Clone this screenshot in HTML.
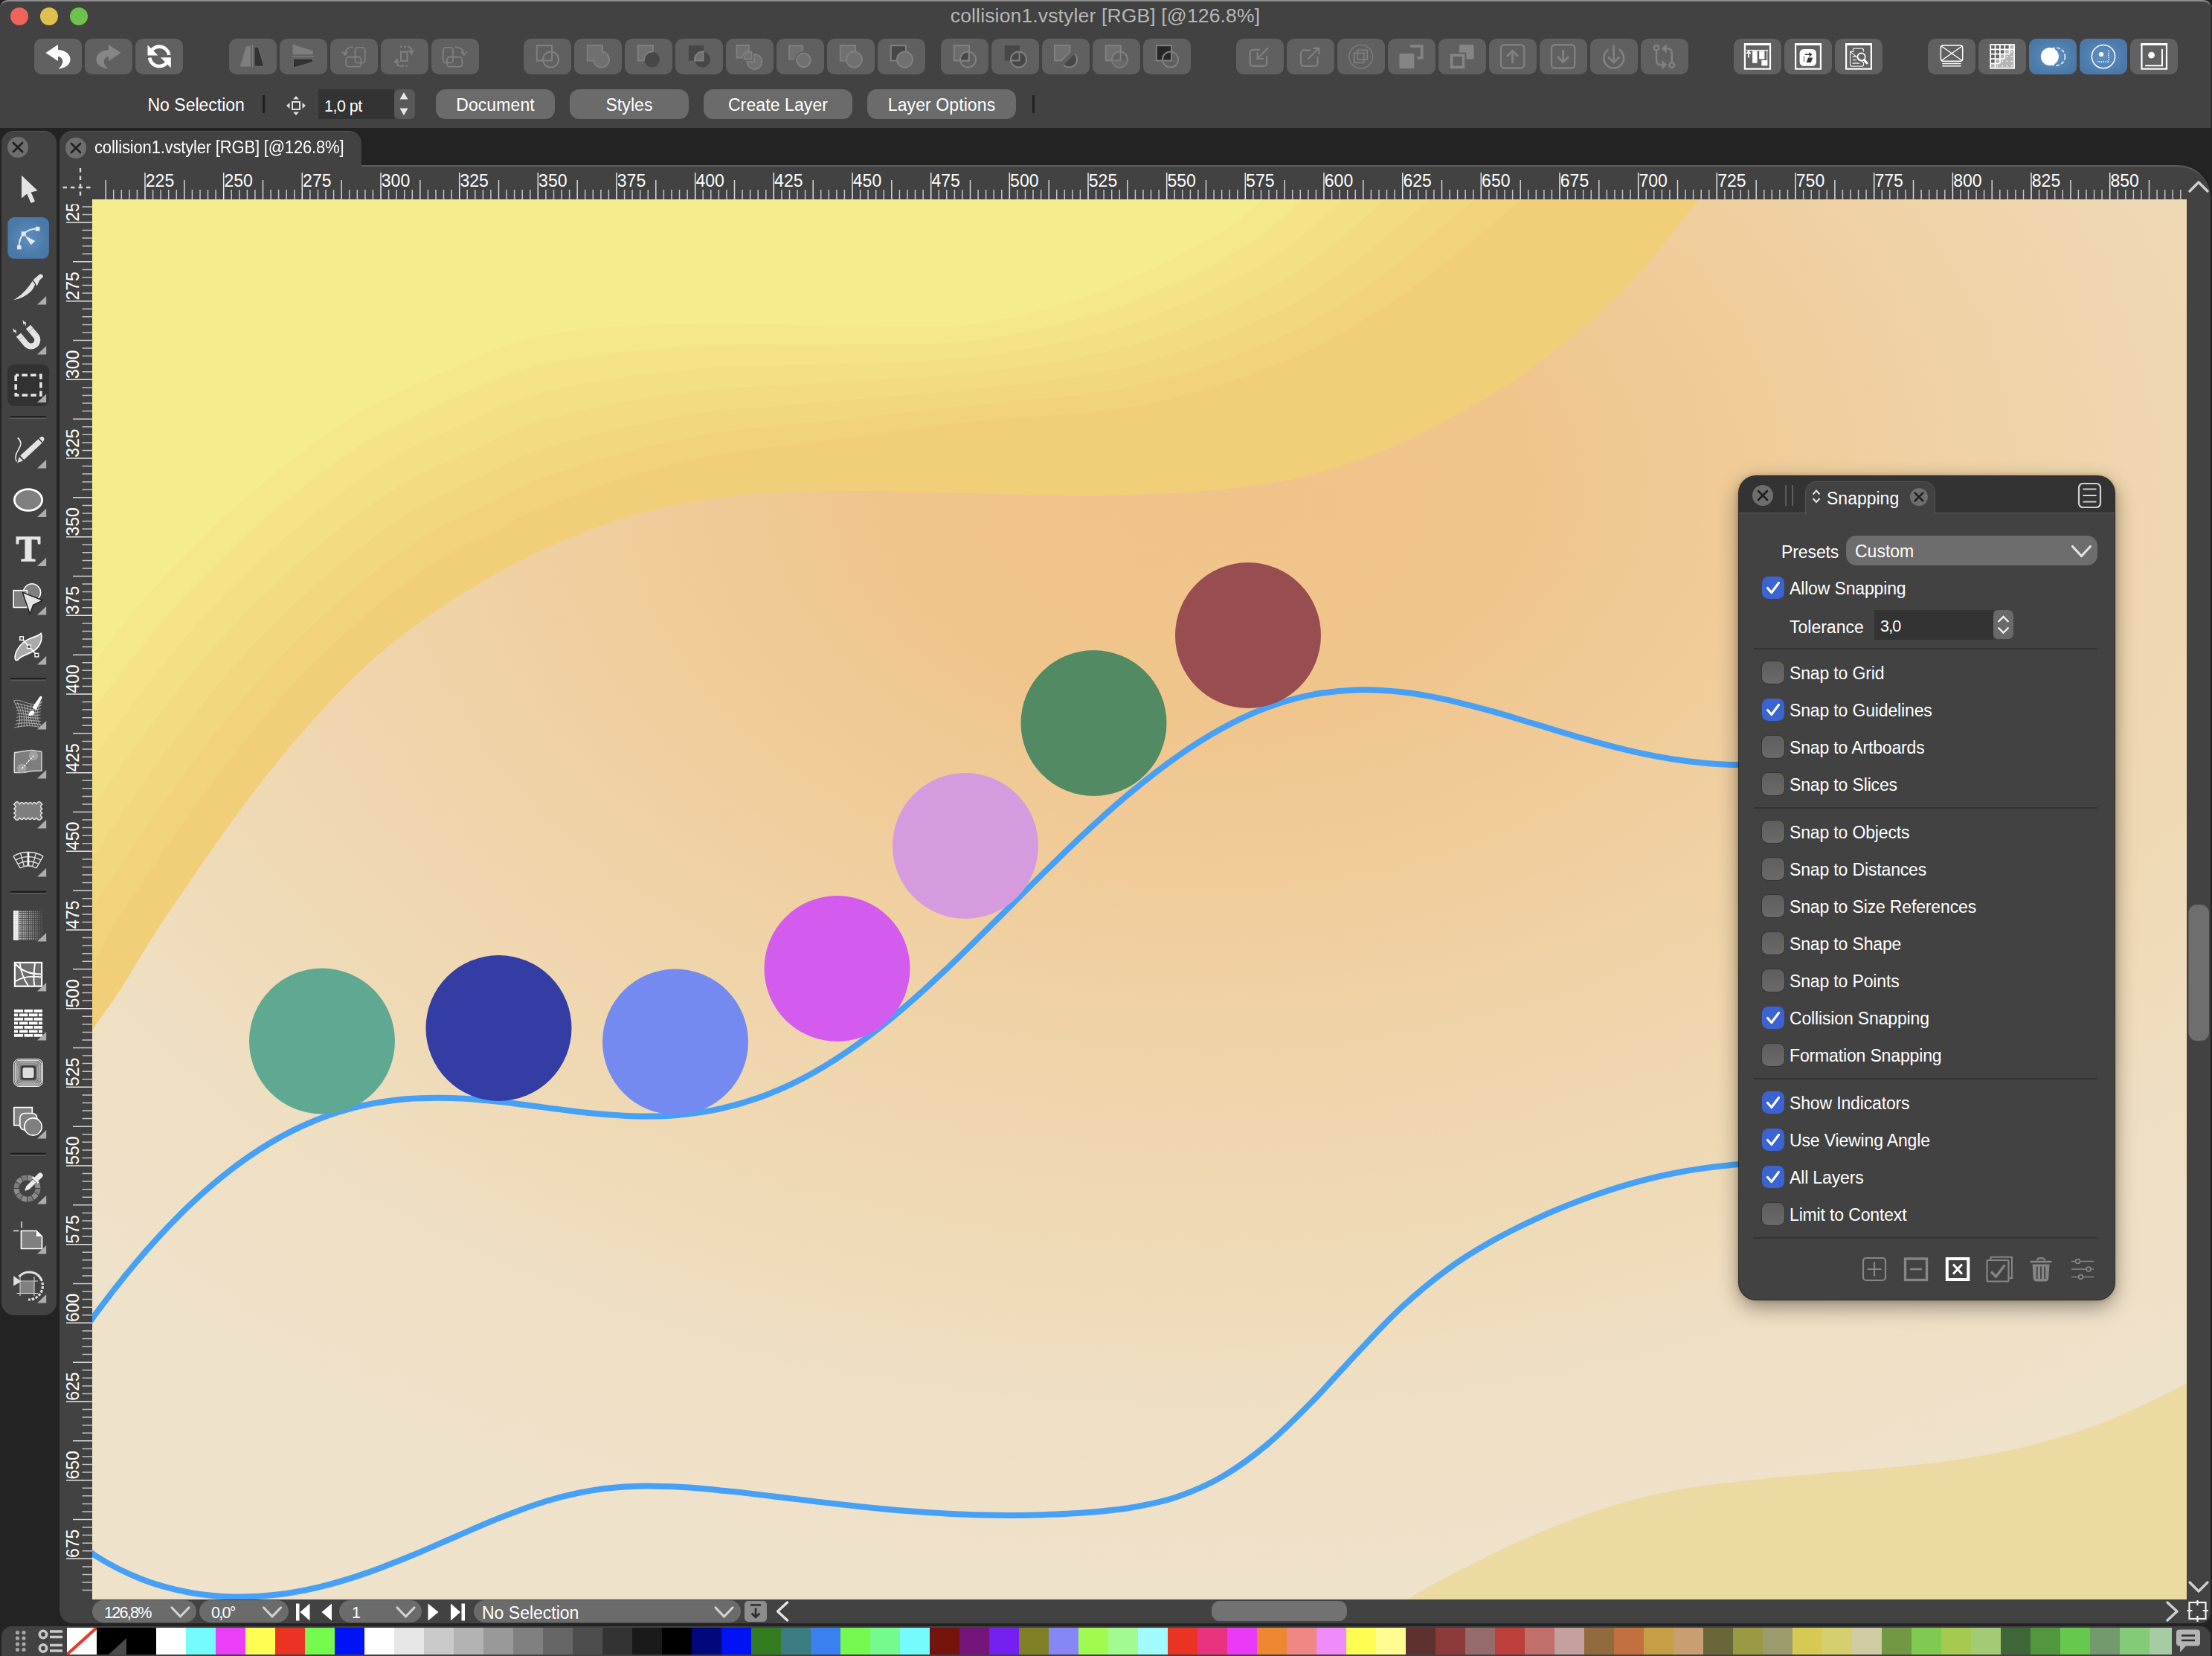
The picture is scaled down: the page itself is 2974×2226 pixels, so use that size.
<!DOCTYPE html><html><head><meta charset="utf-8"><title>collision1.vstyler</title><style>

*{box-sizing:border-box;margin:0;padding:0}
html,body{width:2974px;height:2226px;overflow:hidden;background:#232323;font-family:"Liberation Sans",sans-serif;color:#fff}
.abs{position:absolute}
#win{position:absolute;left:0;top:0;width:2974px;height:2226px;overflow:hidden}
#topbar{position:absolute;left:0;top:0;width:2973px;height:172px;background:#424242;border-top:2px solid #8e8e8e;border-radius:11px 11px 0 0}
#title{position:absolute;left:0;width:2972px;top:4px;text-align:center;font-size:26.5px;color:#b7b7b7;letter-spacing:0.15px;line-height:34px}
.tl{position:absolute;top:10px;width:24px;height:24px;border-radius:50%}
.tb{position:absolute;top:52px;width:64px;height:48px;border-radius:10px;background:#616161}
.tb.dis{background:#606060}
.tb.on{background:radial-gradient(ellipse at center,#5e92c4 0%,#4a78a7 75%)}
.tb svg{position:absolute;left:0;top:0;width:64px;height:48px}
.ctx{position:absolute;font-size:23px;line-height:40px;top:120px;height:40px;white-space:nowrap}
.cbtn{position:absolute;top:120px;height:40px;border-radius:13px;background:#6b6b6b;text-align:center;font-size:23px;line-height:43px;white-space:nowrap;letter-spacing:0.1px}
.pill{position:absolute;top:2151px;height:30px;border-radius:15px;background:#6b6b6b;font-size:23px;line-height:35px;white-space:nowrap}
.pill span{position:absolute;top:0}
#toolbox{position:absolute;left:2px;top:176px;width:74px;height:1592px;border-radius:17px;background:#424242;border-top:1.5px solid #535353}
#doctab{position:absolute;left:80px;top:176px;width:406px;height:50px;border-radius:17px 17px 0 0;background:#424242;border-top:1.5px solid #535353}
#docview{position:absolute;left:80px;top:222px;width:2892px;height:1960px;background:#424242;border-top:2px solid #5c5c5c;border-radius:0 44px 14px 18px}
#palette{position:absolute;left:2px;top:2186px;width:2970px;height:42px;background:#424242;border-radius:14px 14px 0 0}
.sw{position:absolute;top:2188px;height:36px;width:40px}
.xb{position:absolute;width:28px;height:28px;border-radius:50%;background:#6e6e6e}
.xb svg{position:absolute;left:0;top:0}
/* snapping panel */
#snap{position:absolute;left:2338px;top:640px;width:505px;height:1107px;border-radius:23px;background:#424242;box-shadow:0 9px 28px rgba(0,0,0,.42),0 0 7px rgba(0,0,0,.22),0 0 0 1px rgba(20,20,20,.8);overflow:hidden;font-size:23px}
#snaphead{position:absolute;left:0;top:0;width:506px;height:50px;background:#333333;border-bottom:1.5px solid #5a5a5a}
#snaptab{position:absolute;left:90px;top:7px;width:175px;height:45px;background:#424242;border-radius:15px 15px 0 0;border:1.5px solid #555;border-bottom:none}
.row{position:absolute;left:32px;height:30px;line-height:30px;white-space:nowrap}
.cb{position:absolute;left:0;top:0;width:30px;height:30px;border-radius:8.5px;background:linear-gradient(#5e5e5e,#6a6a6a);box-shadow:0 0 0 1px #353535}
.cb.on{background:#3c63d2;box-shadow:none}
.cb svg{position:absolute;left:0;top:0}
.row .lb{position:absolute;left:37px;top:1px;letter-spacing:-0.15px}
.sep{position:absolute;left:21px;width:462px;height:2px;background:#323232}

</style></head><body><div id="win">
<div id="topbar"></div>
<div id="title">collision1.vstyler [RGB] [@126.8%]</div>
<div class="tl" style="left:14px;background:#ee6459"></div>
<div class="tl" style="left:54px;background:#e0c04c"></div>
<div class="tl" style="left:94px;background:#6dc24b"></div>
<div class="tb " style="left:46px"><svg viewBox="0 0 64 48" width="64" height="48"><path d="M15.5 19L32 8V15C42.5 15.5 49 21.5 48.5 28.5C48 35 42 39.500 32.500 40.500C37.500 36.500 39.500 31.500 37.500 27.500C36.300 25 34.500 24 32 24V30Z" fill="#fff"/></svg></div>
<div class="tb dis" style="left:114px"><svg viewBox="0 0 64 48" width="64" height="48"><path transform="translate(64 0) scale(-1 1)" d="M15.5 19L32 8V15C42.5 15.5 49 21.5 48.5 28.5C48 35 42 39.500 32.500 40.500C37.500 36.500 39.500 31.500 37.500 27.500C36.300 25 34.500 24 32 24V30Z" fill="#868686"/></svg></div>
<div class="tb " style="left:182px"><svg viewBox="0 0 64 48" width="64" height="48"><path d="M19.80 19.29A13.2 13.2 0 0 1 45.27 21.96M44.60 28.31A13.2 13.2 0 0 1 19.13 25.64" fill="none" stroke="#fff" stroke-width="4.6"/><path d="M16.5 8.5V22.5H30.5ZM47.8 39.2V25.2H33.8Z" fill="#fff"/></svg></div>
<div class="tb dis" style="left:308px"><svg viewBox="0 0 64 48" width="64" height="48"><path d="M14.8 37.6L22.9 10.2H29.100V37.6Z" fill="#7e7e7e"/><path d="M31.5 8.300V38.4" stroke="#7e7e7e" stroke-width="1.3"/><path d="M34 11.2H39.2L47 37.2H34Z" fill="#333" stroke="#757575" stroke-width=".8"/></svg></div>
<div class="tb dis" style="left:376px"><svg viewBox="0 0 64 48" width="64" height="48"><path d="M17.6 7.5L44.800 16.4V21.300H17.6Z" fill="#7e7e7e"/><path d="M16 23.700H46" stroke="#7e7e7e" stroke-width="1.3"/><path d="M18.4 27H44.4V31.500L18.4 39.200Z" fill="#333" stroke="#757575" stroke-width=".8"/></svg></div>
<div class="tb dis" style="left:444px"><svg viewBox="0 0 64 48" width="64" height="48"><g fill="none" stroke="#808080" stroke-width="1.8"><rect x="33.4" y="11.9" width="13.4" height="20.5" rx="3.500"/><rect x="21.2" y="24.6" width="20.3" height="13" rx="3.500"/><path d="M31 11.2C24 11.2 19.800 15 19.800 21.500M15.800 17.500L19.800 22L23.800 17.500"/></g></svg></div>
<div class="tb dis" style="left:512px"><svg viewBox="0 0 64 48" width="64" height="48"><g fill="none" stroke="#808080" stroke-width="2"><rect x="27" y="17.7" width="8.400" height="12.100"/><path d="M26 10.700H36" stroke-dasharray="3 2"/><path d="M36 10.700C39.500 10.700 41 12.500 41 16"/><path d="M36.200 36.800H28" stroke-dasharray="3 2"/><path d="M28 36.800C23.500 36.800 21.200 35 21.200 31.500"/></g><path d="M36.800 15.800H45.200L41 21.800ZM17 32.200H25.400L21.200 26.200Z" fill="#808080"/></svg></div>
<div class="tb dis" style="left:580px"><svg viewBox="0 0 64 48" width="64" height="48"><g fill="none" stroke="#808080" stroke-width="1.8" transform="translate(64 0) scale(-1 1)"><rect x="34.9" y="11.9" width="13.4" height="20.5" rx="3.500"/><rect x="22.6" y="24.6" width="20.3" height="13" rx="3.500"/><path d="M32.3 11.2C25.300 11.2 20.3 15 20.3 21.500M16.300 17.500L20.3 22L24.3 17.500"/></g></svg></div>
<div class="tb dis" style="left:704px"><svg viewBox="0 0 64 48" width="64" height="48"><rect x="17.8" y="9.2" width="20.2" height="20.3" fill="none" stroke="#808080" stroke-width="2"/><circle cx="36.5" cy="28" r="10.5" fill="none" stroke="#808080" stroke-width="2"/></svg></div>
<div class="tb dis" style="left:772px"><svg viewBox="0 0 64 48" width="64" height="48"><rect x="17.8" y="9.2" width="20.2" height="20.3" fill="#707070" stroke="#808080" stroke-width="2"/><circle cx="36.5" cy="28" r="10.5" fill="#707070" stroke="#808080" stroke-width="2"/><rect x="18.8" y="10.2" width="18.2" height="18.3" fill="#707070" stroke="none" stroke-width="0"/><circle cx="36.5" cy="28" r="9.5" fill="#707070" stroke="none" stroke-width="0"/></svg></div>
<div class="tb dis" style="left:840px"><svg viewBox="0 0 64 48" width="64" height="48"><rect x="17.8" y="9.2" width="20.2" height="20.3" fill="#707070" stroke="#808080" stroke-width="2"/><circle cx="36.5" cy="28" r="10.5" fill="#474747" stroke="none" stroke-width="0"/><path d="M37.5 17.55A10.5 10.5 0 0 0 26.1 29.5" fill="none" stroke="#808080" stroke-width="2"/></svg></div>
<div class="tb dis" style="left:908px"><svg viewBox="0 0 64 48" width="64" height="48"><rect x="17.8" y="9.2" width="20.2" height="20.3" fill="#474747" stroke="none" stroke-width="0"/><circle cx="36.5" cy="28" r="10.5" fill="#474747" stroke="none" stroke-width="0"/><path d="M37.5 17.55A10.5 10.5 0 0 0 26.1 29.5L37.5 29.5Z" fill="#707070" stroke="#808080" stroke-width="2"/></svg></div>
<div class="tb dis" style="left:976px"><svg viewBox="0 0 64 48" width="64" height="48"><g fill="#707070" stroke="#808080" stroke-width="1.8"><path d="M14.5 9H31V16.500A11 11 0 0 0 22 25.500L14.500 25.500Z"/><path d="M34.500 17.500A10 10 0 0 0 24.500 27.500L34.500 27.500Z"/><path d="M38 21A10 10 0 1 1 28.500 31H38Z"/></g></svg></div>
<div class="tb dis" style="left:1044px"><svg viewBox="0 0 64 48" width="64" height="48"><rect x="17" y="9.500" width="18" height="18" fill="#707070" stroke="#808080" stroke-width="1.8"/><circle cx="36.500" cy="29" r="12" fill="#606060"/><circle cx="36.500" cy="29" r="9.300" fill="#707070" stroke="#808080" stroke-width="2"/></svg></div>
<div class="tb dis" style="left:1112px"><svg viewBox="0 0 64 48" width="64" height="48"><rect x="17.8" y="9.2" width="20.2" height="20.3" fill="#707070" stroke="#808080" stroke-width="2"/><circle cx="36.5" cy="28" r="10.5" fill="#707070" stroke="#808080" stroke-width="2"/></svg></div>
<div class="tb dis" style="left:1180px"><svg viewBox="0 0 64 48" width="64" height="48"><rect x="17.8" y="9.2" width="20.2" height="20.3" fill="#474747" stroke="#808080" stroke-width="2"/><circle cx="36.5" cy="28" r="10.5" fill="#707070" stroke="#808080" stroke-width="2"/></svg></div>
<div class="tb dis" style="left:1265px"><svg viewBox="0 0 64 48" width="64" height="48"><rect x="17.8" y="9.2" width="20.2" height="20.3" fill="#6c6c6c" stroke="#808080" stroke-width="2"/><circle cx="36.5" cy="28" r="10.5" fill="none" stroke="#808080" stroke-width="2"/><path d="M37.5 17.55A10.5 10.5 0 0 0 26.1 29.5L37.5 29.5Z" fill="#474747" stroke="#808080" stroke-width="2"/></svg></div>
<div class="tb dis" style="left:1333px"><svg viewBox="0 0 64 48" width="64" height="48"><rect x="17.8" y="9.2" width="20.2" height="20.3" fill="#474747" stroke="none" stroke-width="0"/><circle cx="36.5" cy="28" r="10.5" fill="#474747" stroke="#808080" stroke-width="2"/><path d="M37.5 17.5V29.500H26" fill="none" stroke="#808080" stroke-width="2"/></svg></div>
<div class="tb dis" style="left:1401px"><svg viewBox="0 0 64 48" width="64" height="48"><path d="M17 9H37.5V17.500L26 29.500H17Z" fill="#707070" stroke="#808080" stroke-width="2"/><path d="M44 20.500A10.500 10.500 0 1 1 29 35.400Z" fill="#474747"/><path d="M44 20.500A10.500 10.500 0 1 1 29 35.400" fill="none" stroke="#808080" stroke-width="2"/></svg></div>
<div class="tb dis" style="left:1469px"><svg viewBox="0 0 64 48" width="64" height="48"><rect x="17.8" y="9.2" width="20.2" height="20.3" fill="#707070" stroke="#808080" stroke-width="2"/><circle cx="36.5" cy="28" r="10.5" fill="#606060" stroke="#808080" stroke-width="2"/><path d="M37.5 17.5V29.500H26" fill="none" stroke="#808080" stroke-width="2"/><path d="M37.5 29.500H47A10.500 10.500 0 0 1 26.100 29.500Z" fill="#707070" opacity=".6"/></svg></div>
<div class="tb dis" style="left:1537px"><svg viewBox="0 0 64 48" width="64" height="48"><rect x="17.8" y="9.2" width="20.2" height="20.3" fill="#262626" stroke="#808080" stroke-width="2"/><circle cx="36.5" cy="28" r="10.5" fill="none" stroke="#808080" stroke-width="2"/></svg></div>
<div class="tb dis" style="left:1662px"><svg viewBox="0 0 64 48" width="64" height="48"><g fill="none" stroke="#808080" stroke-width="2.2"><path d="M32 14.800H22.700a4 4 0 0 0-4 4V32.800a4 4 0 0 0 4 4H37.200a4 4 0 0 0 4-4V23.500" stroke-dasharray="40 0"/><path d="M42.800 12.300L28.500 27M28.500 18.500V27H37"/></g></svg></div>
<div class="tb dis" style="left:1730px"><svg viewBox="0 0 64 48" width="64" height="48"><g fill="none" stroke="#808080" stroke-width="2.2"><path d="M32 15.600H23.100a4 4 0 0 0-4 4V32.800a4 4 0 0 0 4 4H37.600a4 4 0 0 0 4-4V24"/><path d="M28.200 27.500L43.500 12.800M35 12.800H43.500V21.300"/></g></svg></div>
<div class="tb dis" style="left:1798px"><svg viewBox="0 0 64 48" width="64" height="48"><g fill="none" stroke="#808080"><circle cx="31.700" cy="24.100" r="15.800" stroke-width="1.3"/><rect x="27.300" y="15.300" width="13" height="12.800" stroke-width="1.800"/><rect x="22.700" y="19.300" width="13" height="13" stroke-width="1.800"/></g></svg></div>
<div class="tb dis" style="left:1866px"><svg viewBox="0 0 64 48" width="64" height="48"><path d="M29.800 10H45.700V25.800H39.500" fill="none" stroke="#858585" stroke-width="3.600"/><rect x="15.400" y="20" width="20" height="20" rx="1.500" fill="#858585"/></svg></div>
<div class="tb dis" style="left:1934px"><svg viewBox="0 0 64 48" width="64" height="48"><rect x="28" y="8" width="19.500" height="19.500" rx="1.500" fill="#858585"/><rect x="13.800" y="18.500" width="23.500" height="23.500" fill="#606060"/><rect x="17.600" y="22.300" width="16" height="16" fill="none" stroke="#858585" stroke-width="3.600"/></svg></div>
<div class="tb dis" style="left:2002px"><svg viewBox="0 0 64 48" width="64" height="48"><rect x="16" y="8.300" width="31.200" height="31.200" rx="4.500" fill="none" stroke="#808080" stroke-width="2.4"/><path d="M31.600 33V16.500M24.100 23.900L31.600 16.400L39.100 23.900" fill="none" stroke="#808080" stroke-width="3"/></svg></div>
<div class="tb dis" style="left:2070px"><svg viewBox="0 0 64 48" width="64" height="48"><rect x="16" y="8.300" width="31.200" height="31.200" rx="4.500" fill="none" stroke="#808080" stroke-width="2.4"/><path d="M31.600 15V31.500M24.100 24.100L31.600 31.600L39.100 24.100" fill="none" stroke="#808080" stroke-width="3"/></svg></div>
<div class="tb dis" style="left:2138px"><svg viewBox="0 0 64 48" width="64" height="48"><g fill="none" stroke="#808080" stroke-width="2.800"><path d="M24.600 14.800A13.400 13.400 0 1 0 38.800 14.800"/><path d="M31.700 8.300V31.500M24 24.400L31.700 32L39.400 24.400"/></g></svg></div>
<div class="tb dis" style="left:2206px"><svg viewBox="0 0 64 48" width="64" height="48"><g fill="none" stroke="#808080" stroke-width="2.600"><circle cx="21.100" cy="12.300" r="3.300"/><circle cx="41.800" cy="35.600" r="3.300"/><path d="M21.100 16V29C21.100 33 23 35.100 27 35.100H29"/><path d="M41.800 32V19.500C41.800 15.500 39.800 13.300 35.800 13.300H34"/></g><path d="M28.500 29V41.200L35.500 35.100ZM34.800 7.200V19.400L27.800 13.300Z" fill="#808080"/></svg></div>
<div class="tb " style="left:2331px"><svg viewBox="0 0 64 48" width="64" height="48"><rect x="14.900" y="7.800" width="34.100" height="32.800" fill="none" stroke="#fff" stroke-width="2.200"/><path d="M14 7.600H50" stroke="#fff" stroke-width="3"/><path d="M17 15.600H46.300" stroke="#fff" stroke-width="1.400"/><path d="M20 25.500V17.500M17.300 20.200L20 17.200L22.700 20.200" stroke="#fff" stroke-width="1.800" fill="none"/><path d="M25.100 16.400H31.600V32.700H25.100ZM34.200 16.400H41.400V27.500H34.200ZM37.300 29.100H45.200V36.300H37.300Z" fill="#fff"/><path d="M44.800 16V36" stroke="#fff" stroke-width="1"/></svg></div>
<div class="tb " style="left:2399px"><svg viewBox="0 0 64 48" width="64" height="48"><rect x="15.100" y="7.800" width="33.800" height="32.800" fill="none" stroke="#fff" stroke-width="2.200"/><path d="M14 7.600H50" stroke="#fff" stroke-width="3"/><rect x="20.600" y="14" width="22.400" height="22.800" rx="5.500" fill="#fff"/><path d="M27.600 21.300H35.500M33.300 18.800L36.300 21.300L33.300 23.800" stroke="#333" stroke-width="1.500" fill="none"/><path d="M29.700 31.900L32 25.400H38.200L35.700 31.900Z" fill="#333"/><path d="M26.500 24V32" stroke="#333" stroke-width="1.400" stroke-dasharray="1.400 1.200"/></svg></div>
<div class="tb " style="left:2467px"><svg viewBox="0 0 64 48" width="64" height="48"><rect x="15.100" y="7.800" width="33.800" height="32.800" fill="none" stroke="#fff" stroke-width="2.200"/><path d="M14 7.600H50" stroke="#fff" stroke-width="3"/><path d="M24.500 13.200H36a2.500 2.500 0 0 1 2.500 2.500V17.500M38.500 32V34.700a2.500 2.500 0 0 1-2.500 2.500H23.100a2.500 2.500 0 0 1-2.500-2.500V17.500ZM20.800 17.300H24.600V13.400" fill="none" stroke="#e8e8e8" stroke-width="1.300"/><path d="M23.800 24.200H28M23.800 28.600H29M23.500 33H33" stroke="#e8e8e8" stroke-width="1.400"/><circle cx="35.600" cy="24.500" r="5.200" fill="none" stroke="#fff" stroke-width="1.700"/><path d="M39.400 28.700L43.200 33" stroke="#fff" stroke-width="3" stroke-linecap="round"/></svg></div>
<div class="tb " style="left:2592px"><svg viewBox="0 0 64 48" width="64" height="48"><rect x="17.400" y="9.100" width="29.300" height="21.100" rx="3" fill="none" stroke="#fff" stroke-width="1.500"/><path d="M18.200 10L46 29.500M46 10L18.200 29.500" stroke="#fff" stroke-width="1.500"/><path d="M19.300 33.500H44.600M19.300 36.800H44.600" stroke="#fff" stroke-width="1.500"/></svg></div>
<div class="tb " style="left:2660px"><svg viewBox="0 0 64 48" width="64" height="48"><path d="M48.100 8V39.700H16.200V33.400H22.600V27H29V20.700H35.300V14.300H41.700V8Z" fill="#b4b4b4"/><rect x="16.200" y="8" width="31.900" height="31.700" fill="none" stroke="#fff" stroke-width="1.800"/><path d="M22.56 8V39.80M16.200 14.36H48.00M28.92 8V33.44M16.200 20.72H41.64M35.28 8V27.08M16.200 27.08H35.28M41.64 8V20.72M16.200 33.44H28.92" stroke="#fff" stroke-width="1.800" fill="none"/><g fill="#fff"><rect x="44.0" y="16.8" width="1.600" height="1.600"/><rect x="37.7" y="23.1" width="1.600" height="1.600"/><rect x="44.0" y="23.1" width="1.600" height="1.600"/><rect x="31.3" y="29.5" width="1.600" height="1.600"/><rect x="37.7" y="29.5" width="1.600" height="1.600"/><rect x="44.0" y="29.5" width="1.600" height="1.600"/><rect x="25.0" y="35.8" width="1.600" height="1.600"/><rect x="31.3" y="35.8" width="1.600" height="1.600"/><rect x="37.7" y="35.8" width="1.600" height="1.600"/><rect x="44.0" y="35.8" width="1.600" height="1.600"/></g></svg></div>
<div class="tb on" style="left:2728px"><svg viewBox="0 0 64 48" width="64" height="48"><circle cx="36.600" cy="24.100" r="11.800" fill="none" stroke="#fff" stroke-width="1.500" stroke-dasharray="4.500 2.500"/><circle cx="27.900" cy="24.100" r="12" fill="#fff"/></svg></div>
<div class="tb on" style="left:2796px"><svg viewBox="0 0 64 48" width="64" height="48"><circle cx="32" cy="24.100" r="15.600" fill="none" stroke="#fff" stroke-width="1.500"/><circle cx="29.100" cy="21" r="3.100" fill="#fff"/><path d="M39 15.600V31M39 31H23.400" stroke="#fff" stroke-width="1.500" stroke-dasharray="1.500 1.500" fill="none"/></svg></div>
<div class="tb " style="left:2864px"><svg viewBox="0 0 64 48" width="64" height="48"><rect x="15.500" y="7.800" width="33.500" height="32.800" fill="none" stroke="#fff" stroke-width="2.200"/><path d="M14.400 7.600H50.100" stroke="#fff" stroke-width="3"/><circle cx="28.600" cy="22.100" r="4.400" fill="#fff"/><path d="M43 14V36.300H20.200" fill="none" stroke="#fff" stroke-width="2"/></svg></div>
<div class="ctx" style="left:198.500px;top:121px">No Selection</div>
<div class="abs" style="left:353px;top:128px;width:2.5px;height:24px;background:#1f1f1f"></div>
<svg class="abs" style="left:384px;top:128px" width="28" height="28" viewBox="-14 -14 28 28"><rect x="-5" y="-5" width="10" height="10" fill="none" stroke="#e0e0e0" stroke-width="2"/><path d="M-4 -8.5L0 -13L4 -8.5ZM-4 8.5L0 13L4 8.5ZM-8.5 -4L-13 0L-8.5 4ZM8.5 -4L13 0L8.5 4Z" fill="#e0e0e0"/></svg>
<div class="abs" style="left:428px;top:120px;width:102px;height:40px;background:#333"></div>
<div class="ctx" style="left:436px;top:123px;font-size:21.5px;letter-spacing:-0.5px">1,0 pt</div>
<div class="abs" style="left:530px;top:120px;width:28px;height:40px;background:#595959;border-radius:7px"></div>
<svg class="abs" style="left:530px;top:120px" width="28" height="40"><path d="M7.5 13.5L13 4L18.5 13.5ZM7.5 25.5L13 35L18.5 25.5Z" fill="#e8e8e8"/></svg>
<div class="cbtn" style="left:586px;width:160px">Document</div>
<div class="cbtn" style="left:766px;width:160px">Styles</div>
<div class="cbtn" style="left:946px;width:200px">Create Layer</div>
<div class="cbtn" style="left:1166px;width:200px">Layer Options</div>
<div class="abs" style="left:1388px;top:128px;width:2.5px;height:24px;background:#1f1f1f"></div>
<div id="toolbox"></div>
<div id="docview"></div>
<div id="doctab"></div>
<div class="xb" style="left:10px;top:184px;width:28px;height:28px;background:#6e6e6e"><svg width="28" height="28" viewBox="-14 -14 28 28"><path d="M-6.04 -6.04L6.04 6.04M6.04 -6.04L-6.04 6.04" stroke="#1e1e1e" stroke-width="2.6" stroke-linecap="round" fill="none"/></svg></div>
<div class="xb" style="left:88px;top:185px;width:28px;height:28px;background:#6e6e6e"><svg width="28" height="28" viewBox="-14 -14 28 28"><path d="M-6.04 -6.04L6.04 6.04M6.04 -6.04L-6.04 6.04" stroke="#1e1e1e" stroke-width="2.6" stroke-linecap="round" fill="none"/></svg></div>
<div class="abs" style="left:127px;top:180px;font-size:22px;line-height:38px;white-space:nowrap;letter-spacing:-0.18px;transform:scale(1,1.07);transform-origin:0 60%">collision1.vstyler [RGB] [@126.8%]</div>
<svg class="abs" style="left:0;top:176px" width="80" height="1600" viewBox="0 176 80 1600">
<defs><radialGradient id="selg"><stop offset="0" stop-color="#5d90c2"/><stop offset="1" stop-color="#4a78a7"/></radialGradient><linearGradient id="grd" x1="0" x2="1" y1="0" y2="0"><stop offset="0" stop-color="#ffffff"/><stop offset="1" stop-color="#ffffff" stop-opacity="0.05"/></linearGradient><pattern id="dots" width="2.600" height="2.600" patternUnits="userSpaceOnUse"><rect width="1.700" height="1.700" fill="#fff"/></pattern><mask id="gm"><rect x="18" y="1224" width="40.300" height="40" fill="url(#grd)"/></mask></defs>
<path d="M29 235.700V266.500L36.200 260.500L41.700 273L47 270.700L41.700 258.600L50.500 256.200Z" fill="#e4e4e4"/>
<rect x="10.300" y="292" width="55.600" height="55.800" rx="9" fill="url(#selg)"/>
<g fill="none" stroke="#e8e8e8" stroke-width="2"><path d="M25.700 330C26 322.500 28.500 317.500 31.800 314.200M34 312.500C38.500 309.300 43.500 307.800 48 307.600"/></g>
<path d="M47.700 304.800h5.700v5.600h-5.700zM28.700 311.200h6.100v6h-6.100zM23 329.700h5.600v5.600H23zM33.200 316.600L41.700 329.300L47.300 324.100Z" fill="#e8e8e8"/>
<path d="M18.100 403.200C27 398.500 36.500 389.500 43.600 377.800L47 382.200C45.500 389.500 36 400 18.100 403.200Z" fill="#e4e4e4"/>
<path d="M44.600 376.300L52.500 369.300C54.800 367.300 58.300 369.300 57.800 372.300C57.500 373.600 56 374.200 55 374.900C53.200 376.200 52.200 378.200 51.400 380.800L49.600 384.600L47.900 381.200Z" fill="#e4e4e4"/>
<path d="M50 409.6L62.200 398.0V409.6Z" fill="#adadad"/>
<g transform="translate(40.500 455.500) rotate(-40)"><path d="M-12.500 -14V2A12.500 12.500 0 0 0 12.500 2V-14H4.500V2A4.500 4.500 0 0 1 -4.500 2V-14Z" fill="#e4e4e4"/><path d="M-12.500 -8.500H-4.500M4.500 -8.500H12.500" stroke="#bdbdbd" stroke-width="1.200"/><path d="M-10.500 -16.500L-9.500 -20.500L-11.500 -21L-8 -26L-8.500 -22L-6.500 -21.500ZM6.500 -16.500L7.500 -20.500L5.500 -21L9 -26L8.500 -22L10.500 -21.500Z" fill="#e4e4e4"/></g>
<path d="M50 476.6L62.200 465.0V476.6Z" fill="#adadad"/>
<rect x="10.100" y="489.700" width="56" height="56.300" rx="9.500" fill="#323232"/>
<rect x="21.200" y="504.200" width="33.700" height="27" fill="none" stroke="#e6e6e6" stroke-width="3.500" stroke-dasharray="7.600 4.100" stroke-dashoffset="3.500"/>
<path d="M50 541.1L62.200 529.5V541.1Z" fill="#adadad"/>
<path d="M14 560.3H62" stroke="#1c1c1c" stroke-width="2.200"/><path d="M14 562.3H62" stroke="#5c5c5c" stroke-width="1.600"/>
<path d="M23.700 588.500C29.500 593 28.500 598.500 25 604C21.500 609.500 19 615.500 22.500 620.500" fill="none" stroke="#e4e4e4" stroke-width="1.600"/>
<path d="M23.300 622.200L25.800 614.200L31 619.300ZM27.200 612.600L51.500 590.300L56.500 595.600L32.300 617.900ZM52.800 589.100L54.200 587.800C55.600 586.600 57.600 586.700 58.700 588.100C59.900 589.500 59.700 591.500 58.400 592.700L57.700 594.400Z" fill="#e4e4e4"/>
<path d="M50 629.6L62.200 618.0V629.6Z" fill="#adadad"/>
<ellipse cx="38" cy="672" rx="18.600" ry="14.400" fill="#808080" stroke="#fff" stroke-width="2.800"/>
<path d="M50 695.1L62.200 683.5V695.1Z" fill="#adadad"/>
<text x="38" y="754" text-anchor="middle" font-family="Liberation Serif, serif" font-weight="bold" font-size="49.500" fill="#e6e6e6" stroke="#e6e6e6" stroke-width="1.300">T</text>
<path d="M50 761.1L62.200 749.5V761.1Z" fill="#adadad"/>
<circle cx="43" cy="796.400" r="11.600" fill="#808080" stroke="#fff" stroke-width="1.600"/>
<rect x="18.200" y="793.700" width="18.200" height="22.800" fill="#808080" stroke="#fff" stroke-width="1.600"/>
<path d="M30.400 796.400L40.300 825.500L44.500 813.500L57.500 807Z" fill="#e4e4e4" stroke="#222" stroke-width="1.500" stroke-linejoin="round"/>
<path d="M50 826.6L62.200 815.0V826.6Z" fill="#adadad"/>
<path d="M20.500 886C18.500 878 27 864 39 859C46 856 51 855 55.200 851.500C57 857 55.500 868 46 874.500C38 880 29 880.500 24.500 886.500C23.200 888.200 21 887.800 20.500 886Z" fill="#a9a9a9" stroke="#fff" stroke-width="1.700"/>
<path d="M29 858L49.400 880.600" stroke="#fff" stroke-width="1.500"/>
<g fill="#3f3f3f" stroke="#fff" stroke-width="1.400"><rect x="26.800" y="855.800" width="4.600" height="4.600"/><rect x="36.700" y="867" width="4.600" height="4.600"/><rect x="47" y="878.300" width="4.600" height="4.600"/></g>
<path d="M50 893.6L62.200 882.0V893.6Z" fill="#adadad"/>
<path d="M14 912.4H62" stroke="#1c1c1c" stroke-width="2.200"/><path d="M14 914.4H62" stroke="#5c5c5c" stroke-width="1.600"/>
<path d="M18.5 942.0C28.0 938.0 40.0 952.0 56.5 944.0M20.0 946.5C28.0 942.8 40.0 954.8 55.8 948.2M21.2 951.0C28.0 947.5 40.0 957.5 55.1 952.5M22.1 955.5C28.0 952.2 40.0 960.2 54.7 956.8M22.5 960.0C28.0 957.0 40.0 963.0 54.5 961.0M22.3 964.5C28.0 961.8 40.0 965.8 54.6 965.2M21.6 969.0C28.0 966.5 40.0 968.5 54.9 969.5M20.5 973.5C28.0 971.2 40.0 971.2 55.5 973.8M19.1 978.0C28.0 976.0 40.0 974.0 56.2 978.0M18.5 942.0C24.0 952.0 30.0 964.0 24.0 978.0M23.2 944.3C27.2 952.0 32.0 964.0 28.0 977.2M28.0 946.2C30.5 952.0 34.0 964.0 32.0 976.6M32.8 947.5C33.8 952.0 36.0 964.0 36.0 976.2M37.5 948.0C37.0 952.0 38.0 964.0 40.0 976.0M42.2 947.5C40.2 952.0 40.0 964.0 44.0 976.2M47.0 946.2C43.5 952.0 42.0 964.0 48.0 976.6M51.8 944.3C46.8 952.0 44.0 964.0 52.0 977.2M56.5 942.0C50.0 952.0 46.0 964.0 56.0 978.0" fill="none" stroke="#d0d0d0" stroke-width=".700"/>
<path d="M43.500 951L53.500 936.500C54.600 935 57 936.200 56.500 938L48.500 954.500Z" fill="#fff"/><path d="M38.700 962.200C38.500 958 40.500 955 44 955.200C46.500 955.500 47.200 958.500 45 960.500C43 962.300 40.500 961.500 38.700 962.200Z" fill="#fff"/>
<path d="M50 980.6L62.200 969.0V980.6Z" fill="#adadad"/>
<path d="M19.600 1011.500C27 1010.500 35 1009 42 1008.500C47 1008.200 51 1010.500 55.600 1010.200C56.500 1017 55.500 1030 56 1036C49 1036.500 44 1035.500 39 1037C33 1038.800 26 1038.500 19.400 1038.500C19 1030 19.200 1020 19.600 1011.500Z" fill="#7e7e7e" stroke="#d8d8d8" stroke-width="1.500"/>
<circle cx="45" cy="1016" r="6.200" fill="#a6a6a6" opacity=".85"/><circle cx="29.300" cy="1033" r="6.200" fill="#a6a6a6" opacity=".85"/>
<path d="M29.300 1033L45 1016" stroke="#fff" stroke-width="1.400" stroke-dasharray="2.600 1.600"/>
<path d="M50 1046.6L62.200 1035.0V1046.6Z" fill="#adadad"/>
<path d="M21.0 1078.5Q23.8 1076.2 26.6 1080.8Q29.4 1076.2 32.2 1080.8Q35.0 1076.2 37.8 1080.8Q40.5 1076.2 43.3 1080.8Q46.1 1076.2 48.9 1080.8Q51.7 1076.2 54.5 1078.5Q54.5 1078.5 56.8 1081.4Q52.2 1084.2 56.8 1087.1Q52.2 1090.0 56.8 1092.9Q52.2 1095.8 56.8 1098.6Q54.5 1101.5 54.5 1101.5Q51.7 1103.8 48.9 1099.2Q46.1 1103.8 43.3 1099.2Q40.5 1103.8 37.8 1099.2Q35.0 1103.8 32.2 1099.2Q29.4 1103.8 26.6 1099.2Q23.8 1103.8 21.0 1101.5Q21.0 1101.5 18.7 1098.6Q23.3 1095.8 18.7 1092.9Q23.3 1090.0 18.7 1087.1Q23.3 1084.2 18.7 1081.4Z" fill="#7e7e7e" stroke="#e0e0e0" stroke-width="1.600" stroke-linejoin="round"/>
<path d="M50 1113.6L62.200 1102.0V1113.6Z" fill="#adadad"/>
<path d="M27.2 1166.8A21.6 21.6 0 0 1 48.8 1166.8M24.2 1161.5A27.7 27.7 0 0 1 51.9 1161.5M21.1 1156.2A33.8 33.8 0 0 1 54.9 1156.2M18.0 1150.9A40 40 0 0 1 58.0 1150.9M27.2 1166.8L18.0 1150.9M32.4 1164.6L27.6 1146.9M38.0 1163.9L38.0 1145.5M43.6 1164.6L48.4 1146.9M48.8 1166.8L58.0 1150.9" fill="none" stroke="#e0e0e0" stroke-width="1.400"/>
<path d="M38 1145.500V1164" stroke="#fff" stroke-width="2.600"/>
<path d="M50 1178.6L62.200 1167.0V1178.6Z" fill="#adadad"/>
<path d="M14 1198.8H62" stroke="#1c1c1c" stroke-width="2.200"/><path d="M14 1200.8H62" stroke="#5c5c5c" stroke-width="1.600"/>
<rect x="18" y="1224" width="40.300" height="40" fill="url(#dots)" mask="url(#gm)"/><rect x="18" y="1224" width="7" height="40" fill="#fff" opacity=".8"/>
<path d="M50 1265.6L62.200 1254.0V1265.6Z" fill="#adadad"/>
<rect x="19.900" y="1293.900" width="36.200" height="31.800" fill="#6c6c6c" stroke="#fff" stroke-width="2.200"/>
<path d="M21 1296C28 1304 40 1309.500 55.500 1309.500M21 1319C30 1313 42 1311.500 55.500 1313.500M26.500 1294C28 1306 33 1318 38 1325M47 1294C46 1304 44 1316 46.500 1325" fill="none" stroke="#fff" stroke-width="1.900"/>
<path d="M50 1332.6L62.200 1321.0V1332.6Z" fill="#adadad"/>
<path d="M19 1357.0H31V1360.8H19ZM32.5 1357.0H44V1360.8H32.5ZM45.5 1357.0H57V1360.8H45.5ZM19 1362.5H24V1366.3H19ZM26 1362.5H37.5V1366.3H26ZM39 1362.5H50.5V1366.3H39ZM52 1362.5H57V1366.3H52ZM19 1368.0H31V1371.8H19ZM32.5 1368.0H44V1371.8H32.5ZM45.5 1368.0H57V1371.8H45.5ZM19 1373.5H24V1377.3H19ZM26 1373.5H37.5V1377.3H26ZM39 1373.5H50.5V1377.3H39ZM52 1373.5H57V1377.3H52ZM19 1379.0H31V1382.8H19ZM32.5 1379.0H44V1382.8H32.5ZM45.5 1379.0H57V1382.8H45.5ZM19 1384.5H24V1388.3H19ZM26 1384.5H37.5V1388.3H26ZM39 1384.5H50.5V1388.3H39ZM52 1384.5H57V1388.3H52ZM19 1390.0H31V1393.8H19ZM32.5 1390.0H44V1393.8H32.5ZM45.5 1390.0H57V1393.8H45.5Z" fill="#fff"/>
<path d="M50 1398.6L62.200 1387.0V1398.6Z" fill="#adadad"/>
<rect x="18.5" y="1423.5" width="39.0" height="37.0" rx="7.0" fill="#6e6e6e" stroke="#fff" stroke-width=".900"/>
<rect x="20.3" y="1425.3" width="35.4" height="33.4" rx="6.1" fill="none" stroke="#fff" stroke-width=".900"/>
<rect x="22.1" y="1427.1" width="31.8" height="29.8" rx="5.2" fill="none" stroke="#ddd" stroke-width=".900"/>
<rect x="23.9" y="1428.9" width="28.2" height="26.2" rx="4.3" fill="none" stroke="#ccc" stroke-width=".900"/>
<rect x="25.7" y="1430.7" width="24.6" height="22.6" rx="3.4" fill="none" stroke="#bbb" stroke-width=".900"/>
<rect x="28" y="1432.500" width="20" height="19" rx="3.500" fill="#3c3c3c"/><rect x="30.500" y="1435" width="15" height="14" rx="2.500" fill="#dcdcdc"/>
<rect x="18.800" y="1488.600" width="24.500" height="24" fill="#808080" stroke="#fff" stroke-width="1.700"/>
<rect x="26.800" y="1496.500" width="23" height="22.500" rx="6.500" fill="#808080" stroke="#fff" stroke-width="1.700"/>
<circle cx="44.500" cy="1514.500" r="11.700" fill="#808080" stroke="#fff" stroke-width="1.700"/>
<path d="M50 1530.6L62.200 1519.0V1530.6Z" fill="#adadad"/>
<path d="M14 1550.9H62" stroke="#1c1c1c" stroke-width="2.200"/><path d="M14 1552.9H62" stroke="#5c5c5c" stroke-width="1.600"/>
<path d="M54.5 1598.1A18 18 0 0 1 52.4 1606.0L46.2 1602.7A11 11 0 0 0 47.5 1597.9Z" fill="#7a7a7a"/><path d="M51.8 1607.0A18 18 0 0 1 46.0 1612.8L42.3 1606.8A11 11 0 0 0 45.8 1603.3Z" fill="#8c8c8c"/><path d="M45.0 1613.4A18 18 0 0 1 37.1 1615.5L36.9 1608.5A11 11 0 0 0 41.7 1607.2Z" fill="#7a7a7a"/><path d="M35.9 1615.5A18 18 0 0 1 28.0 1613.4L31.3 1607.2A11 11 0 0 0 36.1 1608.5Z" fill="#8c8c8c"/><path d="M27.0 1612.8A18 18 0 0 1 21.2 1607.0L27.2 1603.3A11 11 0 0 0 30.7 1606.8Z" fill="#7a7a7a"/><path d="M20.6 1606.0A18 18 0 0 1 18.5 1598.1L25.5 1597.9A11 11 0 0 0 26.8 1602.7Z" fill="#8c8c8c"/><path d="M18.5 1596.9A18 18 0 0 1 20.6 1589.0L26.8 1592.3A11 11 0 0 0 25.5 1597.1Z" fill="#7a7a7a"/><path d="M21.2 1588.0A18 18 0 0 1 27.0 1582.2L30.7 1588.2A11 11 0 0 0 27.2 1591.7Z" fill="#8c8c8c"/><path d="M28.0 1581.6A18 18 0 0 1 35.9 1579.5L36.1 1586.5A11 11 0 0 0 31.3 1587.8Z" fill="#7a7a7a"/><path d="M37.1 1579.5A18 18 0 0 1 45.0 1581.6L41.7 1587.8A11 11 0 0 0 36.9 1586.5Z" fill="#8c8c8c"/><path d="M46.0 1582.2A18 18 0 0 1 51.8 1588.0L45.8 1591.7A11 11 0 0 0 42.3 1588.2Z" fill="#7a7a7a"/><path d="M52.4 1589.0A18 18 0 0 1 54.5 1596.9L47.5 1597.1A11 11 0 0 0 46.2 1592.3Z" fill="#8c8c8c"/>
<g transform="translate(44.500 1589.500) rotate(45)"><path d="M-3.500 -13.500a3.500 3.500 0 0 1 7 0V-6H5.500V-3H-5.500V-6H-3.500Z" fill="#ececec"/><path d="M-3.200 -3H3.200V10L0.800 15.500H-0.800L-3.200 10Z" fill="#ececec" stroke="#424242" stroke-width=".600"/></g>
<path d="M50 1618.6L62.200 1607.0V1618.6Z" fill="#adadad"/>
<path d="M29 1642V1650.500M18 1654.500H25.500" stroke="#e8e8e8" stroke-width="1.500"/>
<path d="M28.500 1654.500H49L56.500 1662V1678.500H28.500Z" fill="#808080" stroke="#fff" stroke-width="1.700" stroke-linejoin="round"/><path d="M49 1654.500V1662H56.500Z" fill="#fff"/>
<path d="M50 1685.6L62.200 1674.0V1685.6Z" fill="#adadad"/>
<path d="M25.500 1716A18.500 18.500 0 0 1 56.500 1722" fill="none" stroke="#e0e0e0" stroke-width="3"/>
<path d="M56.800 1724A18.500 18.500 0 0 1 38 1747" fill="none" stroke="#e0e0e0" stroke-width="3.200" stroke-dasharray="3.400 1.800"/>
<path d="M18.200 1715L28.500 1722.500L18.200 1728.500Z" fill="#e0e0e0"/>
<rect x="27.300" y="1722.500" width="18.500" height="15.500" fill="#808080"/><path d="M27 1716V1742M46 1716V1742M22.500 1722H51M22.500 1738.500H51" stroke="#d8d8d8" stroke-width="1.100"/>
<path d="M50 1751.6L62.200 1740.0V1751.6Z" fill="#adadad"/>
</svg>
<svg class="abs" style="left:80px;top:224px" width="2860" height="44" viewBox="80 224 2860 44" font-family='"Liberation Sans", sans-serif' font-size="23" fill="#fff">
<path d="M84.500 252H122M108 226V263" stroke="#d8d8d8" stroke-width="2.4" stroke-dasharray="5.500 5" fill="none"/>
<text x="195.8" y="250.5">225</text>
<text x="301.5" y="250.5">250</text>
<text x="407.1" y="250.5">275</text>
<text x="512.8" y="250.5">300</text>
<text x="618.5" y="250.5">325</text>
<text x="724.1" y="250.5">350</text>
<text x="829.8" y="250.5">375</text>
<text x="935.5" y="250.5">400</text>
<text x="1041.1" y="250.5">425</text>
<text x="1146.8" y="250.5">450</text>
<text x="1252.5" y="250.5">475</text>
<text x="1358.1" y="250.5">500</text>
<text x="1463.8" y="250.5">525</text>
<text x="1569.5" y="250.5">550</text>
<text x="1675.1" y="250.5">575</text>
<text x="1780.8" y="250.5">600</text>
<text x="1886.5" y="250.5">625</text>
<text x="1992.1" y="250.5">650</text>
<text x="2097.8" y="250.5">675</text>
<text x="2203.5" y="250.5">700</text>
<text x="2309.2" y="250.5">725</text>
<text x="2414.8" y="250.5">750</text>
<text x="2520.5" y="250.5">775</text>
<text x="2626.2" y="250.5">800</text>
<text x="2731.8" y="250.5">825</text>
<text x="2837.5" y="250.5">850</text>
<path d="M195.0 232V268M300.7 232V268M406.3 232V268M512.0 232V268M617.7 232V268M723.3 232V268M829.0 232V268M934.7 232V268M1040.3 232V268M1146.0 232V268M1251.7 232V268M1357.3 232V268M1463.0 232V268M1568.7 232V268M1674.3 232V268M1780.0 232V268M1885.7 232V268M1991.3 232V268M2097.0 232V268M2202.7 232V268M2308.3 232V268M2414.0 232V268M2519.7 232V268M2625.4 232V268M2731.0 232V268M2836.7 232V268" stroke="#e6e6e6" stroke-width="1.5" fill="none"/>
<path d="M142.2 242V268M247.8 242V268M353.5 242V268M459.2 242V268M564.8 242V268M670.5 242V268M776.2 242V268M881.8 242V268M987.5 242V268M1093.2 242V268M1198.8 242V268M1304.5 242V268M1410.2 242V268M1515.8 242V268M1621.5 242V268M1727.2 242V268M1832.8 242V268M1938.5 242V268M2044.2 242V268M2149.8 242V268M2255.5 242V268M2361.2 242V268M2466.9 242V268M2572.5 242V268M2678.2 242V268M2783.9 242V268M2889.5 242V268" stroke="#d4d4d4" stroke-width="1.5" fill="none"/>
<path d="M152.7 255V268M163.3 255V268M173.9 255V268M184.4 255V268M205.6 255V268M216.1 255V268M226.7 255V268M237.3 255V268M258.4 255V268M269.0 255V268M279.5 255V268M290.1 255V268M311.2 255V268M321.8 255V268M332.4 255V268M342.9 255V268M364.1 255V268M374.6 255V268M385.2 255V268M395.8 255V268M416.9 255V268M427.5 255V268M438.0 255V268M448.6 255V268M469.7 255V268M480.3 255V268M490.9 255V268M501.4 255V268M522.6 255V268M533.1 255V268M543.7 255V268M554.3 255V268M575.4 255V268M586.0 255V268M596.5 255V268M607.1 255V268M628.2 255V268M638.8 255V268M649.4 255V268M659.9 255V268M681.1 255V268M691.6 255V268M702.2 255V268M712.8 255V268M733.9 255V268M744.5 255V268M755.0 255V268M765.6 255V268M786.7 255V268M797.3 255V268M807.9 255V268M818.4 255V268M839.6 255V268M850.1 255V268M860.7 255V268M871.3 255V268M892.4 255V268M903.0 255V268M913.5 255V268M924.1 255V268M945.2 255V268M955.8 255V268M966.4 255V268M976.9 255V268M998.1 255V268M1008.6 255V268M1019.2 255V268M1029.8 255V268M1050.9 255V268M1061.5 255V268M1072.0 255V268M1082.6 255V268M1103.7 255V268M1114.3 255V268M1124.9 255V268M1135.4 255V268M1156.6 255V268M1167.1 255V268M1177.7 255V268M1188.3 255V268M1209.4 255V268M1220.0 255V268M1230.5 255V268M1241.1 255V268M1262.2 255V268M1272.8 255V268M1283.4 255V268M1293.9 255V268M1315.1 255V268M1325.6 255V268M1336.2 255V268M1346.8 255V268M1367.9 255V268M1378.5 255V268M1389.0 255V268M1399.6 255V268M1420.7 255V268M1431.3 255V268M1441.9 255V268M1452.4 255V268M1473.6 255V268M1484.1 255V268M1494.7 255V268M1505.3 255V268M1526.4 255V268M1537.0 255V268M1547.5 255V268M1558.1 255V268M1579.2 255V268M1589.8 255V268M1600.4 255V268M1610.9 255V268M1632.1 255V268M1642.6 255V268M1653.2 255V268M1663.8 255V268M1684.9 255V268M1695.5 255V268M1706.0 255V268M1716.6 255V268M1737.7 255V268M1748.3 255V268M1758.9 255V268M1769.4 255V268M1790.6 255V268M1801.1 255V268M1811.7 255V268M1822.3 255V268M1843.4 255V268M1854.0 255V268M1864.5 255V268M1875.1 255V268M1896.2 255V268M1906.8 255V268M1917.4 255V268M1927.9 255V268M1949.1 255V268M1959.6 255V268M1970.2 255V268M1980.8 255V268M2001.9 255V268M2012.5 255V268M2023.0 255V268M2033.6 255V268M2054.7 255V268M2065.3 255V268M2075.9 255V268M2086.4 255V268M2107.6 255V268M2118.1 255V268M2128.7 255V268M2139.3 255V268M2160.4 255V268M2171.0 255V268M2181.5 255V268M2192.1 255V268M2213.2 255V268M2223.8 255V268M2234.4 255V268M2244.9 255V268M2266.1 255V268M2276.6 255V268M2287.2 255V268M2297.8 255V268M2318.9 255V268M2329.5 255V268M2340.1 255V268M2350.6 255V268M2371.8 255V268M2382.3 255V268M2392.9 255V268M2403.5 255V268M2424.6 255V268M2435.2 255V268M2445.7 255V268M2456.3 255V268M2477.4 255V268M2488.0 255V268M2498.6 255V268M2509.1 255V268M2530.3 255V268M2540.8 255V268M2551.4 255V268M2562.0 255V268M2583.1 255V268M2593.7 255V268M2604.2 255V268M2614.8 255V268M2635.9 255V268M2646.5 255V268M2657.1 255V268M2667.6 255V268M2688.8 255V268M2699.3 255V268M2709.9 255V268M2720.5 255V268M2741.6 255V268M2752.2 255V268M2762.7 255V268M2773.3 255V268M2794.4 255V268M2805.0 255V268M2815.6 255V268M2826.1 255V268M2847.3 255V268M2857.8 255V268M2868.4 255V268M2879.0 255V268M2900.1 255V268M2910.7 255V268M2921.2 255V268M2931.8 255V268" stroke="#c4c4c4" stroke-width="1.5" fill="none"/>
</svg>
<svg class="abs" style="left:80px;top:268px" width="44" height="1882" viewBox="80 268 44 1882" font-family='"Liberation Sans", sans-serif' font-size="23" fill="#fff">
<text transform="translate(105.800 297.8) rotate(-90)">250</text>
<text transform="translate(105.800 403.5) rotate(-90)">275</text>
<text transform="translate(105.800 509.1) rotate(-90)">300</text>
<text transform="translate(105.800 614.8) rotate(-90)">325</text>
<text transform="translate(105.800 720.5) rotate(-90)">350</text>
<text transform="translate(105.800 826.1) rotate(-90)">375</text>
<text transform="translate(105.800 931.8) rotate(-90)">400</text>
<text transform="translate(105.800 1037.5) rotate(-90)">425</text>
<text transform="translate(105.800 1143.1) rotate(-90)">450</text>
<text transform="translate(105.800 1248.8) rotate(-90)">475</text>
<text transform="translate(105.800 1354.5) rotate(-90)">500</text>
<text transform="translate(105.800 1460.1) rotate(-90)">525</text>
<text transform="translate(105.800 1565.8) rotate(-90)">550</text>
<text transform="translate(105.800 1671.5) rotate(-90)">575</text>
<text transform="translate(105.800 1777.1) rotate(-90)">600</text>
<text transform="translate(105.800 1882.8) rotate(-90)">625</text>
<text transform="translate(105.800 1988.5) rotate(-90)">650</text>
<text transform="translate(105.800 2094.1) rotate(-90)">675</text>
<text transform="translate(105.800 2199.8) rotate(-90)">700</text>
<rect x="80" y="268" width="44" height="6.500" fill="#424242"/>
<path d="M89 299.0H124M89 404.7H124M89 510.3H124M89 616.0H124M89 721.7H124M89 827.3H124M89 933.0H124M89 1038.7H124M89 1144.3H124M89 1250.0H124M89 1355.7H124M89 1461.3H124M89 1567.0H124M89 1672.7H124M89 1778.3H124M89 1884.0H124M89 1989.7H124M89 2095.3H124" stroke="#e6e6e6" stroke-width="1.5" fill="none"/>
<path d="M98 351.8H124M98 457.5H124M98 563.2H124M98 668.8H124M98 774.5H124M98 880.2H124M98 985.8H124M98 1091.5H124M98 1197.2H124M98 1302.8H124M98 1408.5H124M98 1514.2H124M98 1619.8H124M98 1725.5H124M98 1831.2H124M98 1936.8H124M98 2042.5H124" stroke="#d4d4d4" stroke-width="1.5" fill="none"/>
<path d="M110.5 277.9H124M110.5 288.4H124M110.5 309.6H124M110.5 320.1H124M110.5 330.7H124M110.5 341.3H124M110.5 362.4H124M110.5 373.0H124M110.5 383.5H124M110.5 394.1H124M110.5 415.2H124M110.5 425.8H124M110.5 436.4H124M110.5 446.9H124M110.5 468.1H124M110.5 478.6H124M110.5 489.2H124M110.5 499.8H124M110.5 520.9H124M110.5 531.5H124M110.5 542.0H124M110.5 552.6H124M110.5 573.7H124M110.5 584.3H124M110.5 594.9H124M110.5 605.4H124M110.5 626.6H124M110.5 637.1H124M110.5 647.7H124M110.5 658.3H124M110.5 679.4H124M110.5 690.0H124M110.5 700.5H124M110.5 711.1H124M110.5 732.2H124M110.5 742.8H124M110.5 753.4H124M110.5 763.9H124M110.5 785.1H124M110.5 795.6H124M110.5 806.2H124M110.5 816.8H124M110.5 837.9H124M110.5 848.5H124M110.5 859.0H124M110.5 869.6H124M110.5 890.7H124M110.5 901.3H124M110.5 911.9H124M110.5 922.4H124M110.5 943.6H124M110.5 954.1H124M110.5 964.7H124M110.5 975.3H124M110.5 996.4H124M110.5 1007.0H124M110.5 1017.5H124M110.5 1028.1H124M110.5 1049.2H124M110.5 1059.8H124M110.5 1070.4H124M110.5 1080.9H124M110.5 1102.1H124M110.5 1112.6H124M110.5 1123.2H124M110.5 1133.8H124M110.5 1154.9H124M110.5 1165.5H124M110.5 1176.0H124M110.5 1186.6H124M110.5 1207.7H124M110.5 1218.3H124M110.5 1228.9H124M110.5 1239.4H124M110.5 1260.6H124M110.5 1271.1H124M110.5 1281.7H124M110.5 1292.3H124M110.5 1313.4H124M110.5 1324.0H124M110.5 1334.5H124M110.5 1345.1H124M110.5 1366.2H124M110.5 1376.8H124M110.5 1387.4H124M110.5 1397.9H124M110.5 1419.1H124M110.5 1429.6H124M110.5 1440.2H124M110.5 1450.8H124M110.5 1471.9H124M110.5 1482.5H124M110.5 1493.0H124M110.5 1503.6H124M110.5 1524.7H124M110.5 1535.3H124M110.5 1545.9H124M110.5 1556.4H124M110.5 1577.6H124M110.5 1588.1H124M110.5 1598.7H124M110.5 1609.3H124M110.5 1630.4H124M110.5 1641.0H124M110.5 1651.5H124M110.5 1662.1H124M110.5 1683.2H124M110.5 1693.8H124M110.5 1704.4H124M110.5 1714.9H124M110.5 1736.1H124M110.5 1746.6H124M110.5 1757.2H124M110.5 1767.8H124M110.5 1788.9H124M110.5 1799.5H124M110.5 1810.0H124M110.5 1820.6H124M110.5 1841.7H124M110.5 1852.3H124M110.5 1862.9H124M110.5 1873.4H124M110.5 1894.6H124M110.5 1905.1H124M110.5 1915.7H124M110.5 1926.3H124M110.5 1947.4H124M110.5 1958.0H124M110.5 1968.5H124M110.5 1979.1H124M110.5 2000.2H124M110.5 2010.8H124M110.5 2021.4H124M110.5 2031.9H124M110.5 2053.1H124M110.5 2063.6H124M110.5 2074.2H124M110.5 2084.8H124M110.5 2105.9H124M110.5 2116.5H124M110.5 2127.0H124M110.5 2137.6H124" stroke="#c4c4c4" stroke-width="1.5" fill="none"/>
</svg>
<div class="abs" style="left:124px;top:268px;width:2816px;height:1882px;overflow:hidden"><svg class="art" width="2816" height="1882" viewBox="124 268 2816 1882">
<defs><radialGradient id="pg" gradientUnits="userSpaceOnUse" cx="1620" cy="650" r="2100" gradientTransform="translate(1620 650) scale(1 0.7) translate(-1620 -650)"><stop offset="0" stop-color="#f0c389"/><stop offset="0.207" stop-color="#f0c58c"/><stop offset="0.38" stop-color="#f0cd9c"/><stop offset="0.528" stop-color="#efd4a9"/><stop offset="0.679" stop-color="#efd9b4"/><stop offset="0.832" stop-color="#efdfc2"/><stop offset="0.947" stop-color="#efe1c8"/><stop offset="1" stop-color="#efe2ca"/></radialGradient></defs>
<rect x="0" y="0" width="3100" height="2300" fill="#f5ec8d"/>
<path d="M-55.0 1152.0 C-35.0 1122.5 29.2 1025.8 65.0 975.0 C100.8 924.2 129.8 884.7 160.0 847.0 C190.2 809.3 214.0 781.7 246.0 749.0 C278.0 716.3 313.3 682.8 352.0 651.0 C390.7 619.2 436.7 583.3 478.0 558.0 C519.3 532.7 558.8 516.7 600.0 499.0 C641.2 481.3 670.8 462.7 725.0 452.0 C779.2 441.3 858.3 437.3 925.0 435.0 C991.7 432.7 1062.5 437.7 1125.0 438.0 C1187.5 438.3 1246.0 443.0 1300.0 437.0 C1354.0 431.0 1407.7 414.5 1449.0 402.0 C1490.3 389.5 1514.8 377.7 1548.0 362.0 C1581.2 346.3 1623.0 323.7 1648.0 308.0 C1673.0 292.3 1679.3 285.2 1698.0 268.0 C1716.7 250.8 1731.2 234.7 1760.0 205.0 C1788.8 175.3 1843.5 120.0 1871.0 90.0 C1898.5 60.0 1916.0 35.8 1925.0 25.0 L3100 -100 L3100 2400 L-300 2400 Z" fill="#f4e88a"/>
<path d="M-22.0 1169.7 C-2.1 1140.3 62.2 1043.5 97.7 993.3 C133.1 943.1 161.6 904.9 190.8 868.5 C220.0 832.1 242.1 806.5 272.8 775.2 C303.5 743.8 337.8 711.2 375.0 680.5 C412.2 649.8 456.8 615.1 496.0 590.8 C535.2 566.6 571.7 551.9 610.5 535.0 C649.3 518.1 676.2 500.7 728.7 489.2 C781.1 477.6 858.9 470.0 925.0 465.7 C991.1 461.4 1062.1 464.5 1125.0 463.3 C1187.9 462.1 1247.1 464.6 1302.3 458.5 C1357.6 452.4 1413.4 438.5 1456.5 426.8 C1499.6 415.2 1525.9 403.8 1560.7 388.7 C1595.5 373.5 1638.4 351.6 1665.3 335.8 C1692.2 320.1 1701.9 311.2 1722.2 294.0 C1742.4 276.8 1757.3 261.4 1787.0 232.3 C1816.7 203.3 1872.0 149.2 1900.2 119.7 C1928.3 90.1 1946.6 65.8 1955.8 55.0 L3100 -100 L3100 2400 L-300 2400 Z" fill="#f4e487"/>
<path d="M11.0 1187.3 C30.9 1158.1 95.2 1061.2 130.3 1011.7 C165.4 962.1 193.4 925.1 221.7 890.0 C249.9 854.9 270.3 831.3 299.7 801.3 C329.1 771.3 362.3 739.6 398.0 710.0 C433.7 680.4 476.8 646.8 514.0 623.7 C551.2 600.5 584.6 587.2 621.0 571.0 C657.4 554.8 681.7 538.8 732.3 526.3 C783.0 513.9 859.6 502.6 925.0 496.3 C990.4 490.1 1061.7 491.4 1125.0 488.7 C1188.3 485.9 1248.2 486.2 1304.7 480.0 C1361.2 473.8 1419.2 462.4 1464.0 451.7 C1508.8 440.9 1536.9 430.0 1573.3 415.3 C1609.8 400.7 1653.8 379.6 1682.7 363.7 C1711.5 347.8 1724.4 337.3 1746.3 320.0 C1768.2 302.7 1783.5 288.1 1814.0 259.7 C1844.5 231.2 1900.6 178.4 1929.3 149.3 C1958.1 120.2 1977.1 95.7 1986.7 85.0 L3100 -100 L3100 2400 L-300 2400 Z" fill="#f3e084"/>
<path d="M44.0 1205.0 C63.8 1175.8 128.2 1078.9 163.0 1030.0 C197.8 981.1 225.2 945.2 252.5 911.5 C279.8 877.8 298.4 856.2 326.5 827.5 C354.6 798.8 386.8 768.0 421.0 739.5 C455.2 711.0 496.9 678.6 532.0 656.5 C567.1 634.4 597.5 622.5 631.5 607.0 C665.5 591.5 687.1 576.8 736.0 563.5 C784.9 550.2 860.2 535.2 925.0 527.0 C989.8 518.8 1061.3 518.2 1125.0 514.0 C1188.7 509.8 1249.2 507.8 1307.0 501.5 C1364.8 495.2 1425.0 486.4 1471.5 476.5 C1518.0 466.6 1547.9 456.2 1586.0 442.0 C1624.1 427.8 1669.2 407.5 1700.0 391.5 C1730.8 375.5 1747.0 363.4 1770.5 346.0 C1794.0 328.6 1809.7 314.8 1841.0 287.0 C1872.3 259.2 1929.1 207.7 1958.5 179.0 C1987.9 150.3 2007.7 125.7 2017.5 115.0 L3100 -100 L3100 2400 L-300 2400 Z" fill="#f2db81"/>
<path d="M77.0 1222.7 C96.8 1193.6 161.3 1096.6 195.7 1048.3 C230.1 1000.1 257.1 965.4 283.3 933.0 C309.6 900.6 326.6 881.0 353.3 853.7 C380.1 826.3 411.2 796.4 444.0 769.0 C476.8 741.6 517.0 710.3 550.0 689.3 C583.0 668.3 610.4 657.8 642.0 643.0 C673.6 628.2 692.5 614.9 739.7 600.7 C786.8 586.4 860.8 567.9 925.0 557.7 C989.2 547.4 1060.9 545.1 1125.0 539.3 C1189.1 533.6 1250.3 529.3 1309.3 523.0 C1368.3 516.7 1430.8 510.4 1479.0 501.3 C1527.2 492.3 1558.9 482.3 1598.7 468.7 C1638.4 455.0 1684.7 435.4 1717.3 419.3 C1750.0 403.2 1769.6 389.5 1794.7 372.0 C1819.8 354.5 1835.8 341.6 1868.0 314.3 C1900.2 287.1 1957.6 236.9 1987.7 208.7 C2017.7 180.4 2038.2 155.6 2048.3 145.0 L3100 -100 L3100 2400 L-300 2400 Z" fill="#f1d77e"/>
<path d="M110.0 1240.3 C129.7 1211.4 194.3 1114.3 228.3 1066.7 C262.4 1019.0 288.9 985.6 314.2 954.5 C339.5 923.4 354.7 905.8 380.2 879.8 C405.6 853.8 435.7 824.8 467.0 798.5 C498.3 772.2 537.1 742.1 568.0 722.2 C598.9 702.3 623.3 693.1 652.5 679.0 C681.7 664.9 697.9 652.9 743.3 637.8 C788.8 622.7 861.4 600.5 925.0 588.3 C988.6 576.1 1060.6 572.0 1125.0 564.7 C1189.4 557.4 1251.4 550.9 1311.7 544.5 C1371.9 538.1 1436.6 534.4 1486.5 526.2 C1536.4 518.0 1570.0 508.5 1611.3 495.3 C1652.7 482.2 1700.1 463.4 1734.7 447.2 C1769.2 430.9 1792.1 415.6 1818.8 398.0 C1845.6 380.4 1862.0 368.3 1895.0 341.7 C1928.0 315.1 1986.1 266.1 2016.8 238.3 C2047.5 210.6 2068.8 185.6 2079.2 175.0 L3100 -100 L3100 2400 L-300 2400 Z" fill="#f1d37b"/>
<path d="M143.0 1258.0 C162.7 1229.2 227.3 1132.0 261.0 1085.0 C294.7 1038.0 320.7 1005.8 345.0 976.0 C369.3 946.2 382.8 930.7 407.0 906.0 C431.2 881.3 460.2 853.2 490.0 828.0 C519.8 802.8 557.2 773.8 586.0 755.0 C614.8 736.2 636.2 728.3 663.0 715.0 C689.8 701.7 703.3 691.0 747.0 675.0 C790.7 659.0 862.0 633.2 925.0 619.0 C988.0 604.8 1060.2 598.8 1125.0 590.0 C1189.8 581.2 1252.5 572.5 1314.0 566.0 C1375.5 559.5 1442.3 558.3 1494.0 551.0 C1545.7 543.7 1581.0 534.7 1624.0 522.0 C1667.0 509.3 1715.5 491.3 1752.0 475.0 C1788.5 458.7 1814.7 441.7 1843.0 424.0 C1871.3 406.3 1888.2 395.0 1922.0 369.0 C1955.8 343.0 2014.7 295.3 2046.0 268.0 C2077.3 240.7 2099.3 215.5 2110.0 205.0 L3100 -100 L3100 2400 L-300 2400 Z" fill="#f0cf78"/>
<path d="M70.0 1470.0 C79.0 1455.8 108.7 1408.3 124.0 1385.0 C139.3 1361.7 144.3 1357.2 162.0 1330.0 C179.7 1302.8 196.8 1270.5 230.0 1222.0 C263.2 1173.5 317.5 1093.3 361.0 1039.0 C404.5 984.7 447.5 936.2 491.0 896.0 C534.5 855.8 578.5 825.8 622.0 798.0 C665.5 770.2 708.5 748.0 752.0 729.0 C795.5 710.0 839.5 694.8 883.0 684.0 C926.5 673.2 969.7 668.0 1013.0 664.0 C1056.3 660.0 1095.2 660.2 1143.0 660.0 C1190.8 659.8 1240.7 662.0 1300.0 663.0 C1359.3 664.0 1432.7 668.0 1499.0 666.0 C1565.3 664.0 1640.0 660.2 1698.0 651.0 C1756.0 641.8 1797.3 630.2 1847.0 611.0 C1896.7 591.8 1954.7 560.0 1996.0 536.0 C2037.3 512.0 2061.8 493.5 2095.0 467.0 C2128.2 440.5 2163.5 410.2 2195.0 377.0 C2226.5 343.8 2260.7 297.5 2284.0 268.0 C2307.3 238.5 2326.5 211.3 2335.0 200.0 L3100 -100 L3100 2400 L-300 2400 Z" fill="url(#pg)"/>
<path d="M1800.0 2205.0 C1815.3 2195.8 1868.8 2163.7 1892.0 2150.0 C1915.2 2136.3 1915.0 2135.8 1939.5 2123.0 C1964.0 2110.2 2005.9 2088.4 2039.0 2073.5 C2072.1 2058.6 2104.8 2045.0 2138.0 2033.7 C2171.2 2022.5 2204.8 2013.0 2238.0 2006.0 C2271.2 1999.0 2303.8 1995.6 2337.0 1991.5 C2370.2 1987.4 2403.8 1984.6 2437.0 1981.5 C2470.2 1978.4 2502.9 1976.3 2536.0 1973.0 C2569.1 1969.7 2602.4 1966.8 2635.6 1961.6 C2668.8 1956.4 2701.8 1950.4 2735.0 1941.7 C2768.2 1933.0 2800.3 1923.1 2834.5 1909.4 C2868.7 1895.7 2909.1 1875.4 2940.0 1859.7 C2970.9 1844.0 3006.7 1822.5 3020.0 1815.0 L3100 2300 L1700 2300 Z" fill="#ecdaa3"/>
<path d="M60.0 1865.3 C70.1 1850.6 100.5 1804.6 120.8 1776.8 C141.0 1749.1 161.3 1722.9 181.5 1698.8 C201.8 1674.7 222.1 1652.5 242.3 1632.4 C262.6 1612.2 282.8 1594.1 303.1 1578.1 C323.3 1562.0 343.6 1548.0 363.8 1536.0 C384.1 1523.9 404.4 1514.0 424.6 1505.8 C444.9 1497.6 465.1 1491.4 485.4 1486.7 C505.6 1481.9 525.9 1479.1 546.2 1477.3 C566.4 1475.5 586.7 1475.5 606.9 1476.0 C627.2 1476.5 647.4 1478.5 667.7 1480.5 C687.9 1482.5 708.2 1485.6 728.5 1488.1 C748.7 1490.6 769.0 1493.7 789.2 1495.7 C809.5 1497.7 829.7 1499.7 850.0 1500.2 C870.3 1500.7 890.5 1500.6 910.8 1498.9 C931.0 1497.1 951.3 1494.3 971.5 1489.6 C991.8 1485.0 1012.1 1478.9 1032.3 1471.0 C1052.6 1463.1 1072.8 1453.5 1093.1 1442.2 C1113.3 1430.9 1133.6 1417.7 1153.8 1403.2 C1174.1 1388.7 1194.4 1372.4 1214.6 1355.1 C1234.9 1337.9 1255.1 1319.0 1275.4 1299.8 C1295.6 1280.7 1315.9 1260.2 1336.2 1240.2 C1356.4 1220.1 1376.7 1199.4 1396.9 1179.5 C1417.2 1159.6 1437.4 1139.5 1457.7 1120.7 C1477.9 1101.9 1498.2 1083.5 1518.5 1066.7 C1538.7 1049.8 1559.0 1033.7 1579.2 1019.4 C1599.5 1005.1 1619.7 992.0 1640.0 980.8 C1660.3 969.6 1680.5 959.9 1700.8 952.1 C1721.0 944.4 1741.3 938.5 1761.5 934.4 C1781.8 930.2 1802.1 928.1 1822.3 927.4 C1842.6 926.7 1862.8 927.9 1883.1 930.1 C1903.3 932.2 1923.6 936.1 1943.8 940.3 C1964.1 944.6 1984.4 950.2 2004.6 955.7 C2024.9 961.3 2045.1 967.7 2065.4 973.7 C2085.6 979.8 2105.9 986.2 2126.2 991.9 C2146.4 997.7 2166.7 1003.4 2186.9 1008.1 C2207.2 1012.8 2227.4 1017.1 2247.7 1020.2 C2267.9 1023.4 2288.2 1025.7 2308.5 1027.0 C2328.7 1028.3 2349.0 1028.5 2369.2 1027.9 C2389.5 1027.2 2419.9 1024.0 2430.0 1023.2" fill="none" stroke="#46a0f6" stroke-width="8"/>
<path d="M70.0 2045.2 C80.1 2053.1 110.3 2079.6 130.5 2092.5 C150.7 2105.5 170.9 2115.0 191.0 2123.0 C211.2 2130.9 231.4 2136.1 251.5 2140.0 C271.7 2143.9 291.9 2145.8 312.1 2146.4 C332.2 2146.9 352.4 2145.8 372.6 2143.5 C392.7 2141.2 412.9 2137.2 433.1 2132.3 C453.2 2127.4 473.4 2121.1 493.6 2114.1 C513.8 2107.2 533.9 2099.0 554.1 2090.8 C574.3 2082.5 594.4 2073.3 614.6 2064.7 C634.8 2056.1 655.0 2046.9 675.1 2039.1 C695.3 2031.2 715.5 2023.5 735.6 2017.5 C755.8 2011.6 776.0 2006.7 796.2 2003.4 C816.3 2000.1 836.5 1998.5 856.7 1997.8 C876.8 1997.0 897.0 1998.0 917.2 1999.1 C937.4 2000.1 957.5 2002.3 977.7 2004.3 C997.9 2006.3 1018.0 2008.8 1038.2 2011.2 C1058.4 2013.6 1078.5 2016.2 1098.7 2018.6 C1118.9 2020.9 1139.1 2023.3 1159.2 2025.4 C1179.4 2027.5 1199.6 2029.5 1219.7 2031.1 C1239.9 2032.7 1260.1 2034.1 1280.3 2035.0 C1300.4 2036.0 1320.6 2036.6 1340.8 2036.8 C1360.9 2037.0 1381.1 2036.9 1401.3 2036.3 C1421.5 2035.6 1441.6 2034.8 1461.8 2033.1 C1482.0 2031.5 1502.1 2029.8 1522.3 2026.3 C1542.5 2022.7 1562.6 2018.9 1582.8 2012.0 C1603.0 2005.1 1623.2 1996.6 1643.3 1984.9 C1663.5 1973.1 1683.7 1958.4 1703.8 1941.6 C1724.0 1924.7 1744.2 1904.4 1764.4 1883.8 C1784.5 1863.3 1804.7 1839.7 1824.9 1818.4 C1845.0 1797.2 1865.2 1775.0 1885.4 1756.4 C1905.6 1737.7 1925.7 1721.2 1945.9 1706.4 C1966.1 1691.7 1986.2 1679.5 2006.4 1668.1 C2026.6 1656.6 2046.8 1646.8 2066.9 1637.6 C2087.1 1628.3 2107.3 1620.2 2127.4 1612.6 C2147.6 1605.1 2167.8 1598.3 2187.9 1592.4 C2208.1 1586.6 2228.3 1581.5 2248.5 1577.5 C2268.6 1573.4 2288.8 1570.5 2309.0 1568.0 C2329.1 1565.5 2349.3 1564.2 2369.5 1562.6 C2389.7 1560.9 2419.9 1558.8 2430.0 1558.0" fill="none" stroke="#46a0f6" stroke-width="8"/>
<circle cx="433.0" cy="1399.5" r="98" fill="#5fa992"/>
<circle cx="670.5" cy="1382.0" r="98" fill="#343da3"/>
<circle cx="908.0" cy="1400.5" r="98" fill="#748af0"/>
<circle cx="1125.5" cy="1302.0" r="98" fill="#d35cee"/>
<circle cx="1298.0" cy="1137.0" r="98" fill="#d69bdf"/>
<circle cx="1470.5" cy="972.0" r="98" fill="#528a64"/>
<circle cx="1678.0" cy="854.0" r="98" fill="#984e50"/>
</svg></div>
<svg class="abs" style="left:2940px;top:224px" width="34" height="1960" viewBox="2940 224 34 1960">
<path d="M2944 257L2956 245L2968 257" fill="none" stroke="#cfcfcf" stroke-width="3.4" stroke-linecap="round" stroke-linejoin="round"/>
<path d="M2944 2127L2956 2139L2968 2127" fill="none" stroke="#cfcfcf" stroke-width="3.4" stroke-linecap="round" stroke-linejoin="round"/>
<rect x="2942.500" y="1216" width="27.500" height="183" rx="11" fill="#6e6e6e"/>
<g stroke="#f0f0f0" stroke-width="2.2" fill="none"><rect x="2943.5" y="2154" width="22" height="22"/><path d="M2954.5 2151V2158M2954.5 2172V2180M2940.5 2165H2947.5M2961.5 2165H2969"/></g>
</svg>
<div class="pill" style="left:124px;width:140px"><span style="left:16px;font-size:21.5px;letter-spacing:-1.7px">126,8%</span></div>
<div class="pill" style="left:268px;width:120px"><span style="left:16px;font-size:21.5px;letter-spacing:-1.7px">0,0°</span></div>
<div class="pill" style="left:456px;width:111px"><span style="left:17px;font-size:21.5px">1</span></div>
<div class="pill" style="left:637px;width:359px"><span style="left:11px;">No Selection</span></div>
<svg class="abs" style="left:124px;top:2150px" width="2816" height="32" viewBox="124 2150 2816 32">
<path d="M231 2161L242.5 2173L254 2161" fill="none" stroke="#d2d2d2" stroke-width="3.2" stroke-linecap="round" stroke-linejoin="round"/>
<path d="M354.5 2161L366 2173L377.5 2161" fill="none" stroke="#d2d2d2" stroke-width="3.2" stroke-linecap="round" stroke-linejoin="round"/>
<path d="M534 2161L545.5 2173L557 2161" fill="none" stroke="#d2d2d2" stroke-width="3.2" stroke-linecap="round" stroke-linejoin="round"/>
<path d="M962 2161L973.5 2173L985 2161" fill="none" stroke="#d2d2d2" stroke-width="3.2" stroke-linecap="round" stroke-linejoin="round"/>
<path d="M398 2155.5h4.5v23h-4.5zM416.5 2155.5v23l-13-11.5zM446 2155.5v23l-13.5-11.5zM575.5 2155.5v23l14-11.5zM606 2155.5v23l13-11.5zM620.5 2155.5h4.5v23h-4.5z" fill="#fff"/>
<rect x="1001" y="2152" width="30" height="28" rx="5" fill="#8c8c8c"/>
<path d="M1009 2157.5h14M1016 2161.5v12M1010.5 2168.5l5.5 5.5l5.5-5.5" stroke="#2c2c2c" stroke-width="2.6" fill="none"/>
<path d="M1058.5 2154L1045.5 2166L1058.5 2178" fill="none" stroke="#e4e4e4" stroke-width="3.4" stroke-linecap="round" stroke-linejoin="round"/>
<path d="M2914 2154L2927 2166L2914 2178" fill="none" stroke="#d0d0d0" stroke-width="3.4" stroke-linecap="round" stroke-linejoin="round"/>
<rect x="1629" y="2152" width="182" height="27" rx="11" fill="#727272"/>
</svg>
<div id="palette"></div>
<svg class="sw" style="left:90px" width="40" height="36"><rect width="40" height="36" fill="#fff"/><path d="M0 36L40 0" stroke="#e8392b" stroke-width="4.2"/></svg>
<svg class="sw" style="left:130px" width="40" height="36"><rect width="40" height="36" fill="#000"/><path d="M16 36L40 14V36Z" fill="#4a4a4a"/></svg>
<div class="sw" style="left:170px;width:40px;background:#000000"></div>
<div class="sw" style="left:210px;width:40px;background:#ffffff"></div>
<div class="sw" style="left:250px;width:40px;background:#73fbfd"></div>
<div class="sw" style="left:290px;width:40px;background:#ea3ff7"></div>
<div class="sw" style="left:330px;width:40px;background:#fffc54"></div>
<div class="sw" style="left:370px;width:40px;background:#ea3323"></div>
<div class="sw" style="left:410px;width:40px;background:#75f94d"></div>
<div class="sw" style="left:450px;width:40px;background:#0013f5"></div>
<div class="sw" style="left:490px;width:40px;background:#ffffff"></div>
<div class="sw" style="left:530px;width:40px;background:#e6e6e6"></div>
<div class="sw" style="left:570px;width:40px;background:#cacaca"></div>
<div class="sw" style="left:610px;width:40px;background:#b3b3b3"></div>
<div class="sw" style="left:650px;width:40px;background:#999999"></div>
<div class="sw" style="left:690px;width:40px;background:#808080"></div>
<div class="sw" style="left:730px;width:40px;background:#666666"></div>
<div class="sw" style="left:770px;width:40px;background:#4d4d4d"></div>
<div class="sw" style="left:810px;width:40px;background:#333333"></div>
<div class="sw" style="left:850px;width:40px;background:#1a1a1a"></div>
<div class="sw" style="left:890px;width:40px;background:#000000"></div>
<div class="sw" style="left:930px;width:40px;background:#01087b"></div>
<div class="sw" style="left:970px;width:40px;background:#0013f5"></div>
<div class="sw" style="left:1010px;width:40px;background:#347c22"></div>
<div class="sw" style="left:1050px;width:40px;background:#3a7c80"></div>
<div class="sw" style="left:1090px;width:40px;background:#3a80f0"></div>
<div class="sw" style="left:1130px;width:40px;background:#75f94d"></div>
<div class="sw" style="left:1170px;width:40px;background:#75fa8d"></div>
<div class="sw" style="left:1210px;width:40px;background:#73fbfd"></div>
<div class="sw" style="left:1250px;width:40px;background:#75140c"></div>
<div class="sw" style="left:1290px;width:40px;background:#75147b"></div>
<div class="sw" style="left:1330px;width:40px;background:#7420f0"></div>
<div class="sw" style="left:1370px;width:40px;background:#808026"></div>
<div class="sw" style="left:1410px;width:40px;background:#8686f7"></div>
<div class="sw" style="left:1450px;width:40px;background:#a1fb4e"></div>
<div class="sw" style="left:1490px;width:40px;background:#a1fb8e"></div>
<div class="sw" style="left:1530px;width:40px;background:#a1fbfd"></div>
<div class="sw" style="left:1570px;width:40px;background:#ea3323"></div>
<div class="sw" style="left:1610px;width:40px;background:#ea337f"></div>
<div class="sw" style="left:1650px;width:40px;background:#ea3af7"></div>
<div class="sw" style="left:1690px;width:40px;background:#ee8732"></div>
<div class="sw" style="left:1730px;width:40px;background:#ef8784"></div>
<div class="sw" style="left:1770px;width:40px;background:#ef8cf9"></div>
<div class="sw" style="left:1810px;width:40px;background:#fffd54"></div>
<div class="sw" style="left:1850px;width:40px;background:#fffd91"></div>
<div class="sw" style="left:1890px;width:40px;background:#5e3030"></div>
<div class="sw" style="left:1930px;width:40px;background:#8c3a3a"></div>
<div class="sw" style="left:1970px;width:40px;background:#956b6b"></div>
<div class="sw" style="left:2010px;width:40px;background:#bc3f3a"></div>
<div class="sw" style="left:2050px;width:40px;background:#c26e6b"></div>
<div class="sw" style="left:2090px;width:40px;background:#c4a09e"></div>
<div class="sw" style="left:2130px;width:40px;background:#916a3d"></div>
<div class="sw" style="left:2170px;width:40px;background:#c27040"></div>
<div class="sw" style="left:2210px;width:40px;background:#c69e45"></div>
<div class="sw" style="left:2250px;width:40px;background:#c99f72"></div>
<div class="sw" style="left:2290px;width:40px;background:#69663a"></div>
<div class="sw" style="left:2330px;width:40px;background:#999a43"></div>
<div class="sw" style="left:2370px;width:40px;background:#9c9b6e"></div>
<div class="sw" style="left:2410px;width:40px;background:#d6ca55"></div>
<div class="sw" style="left:2450px;width:40px;background:#d6cf6e"></div>
<div class="sw" style="left:2490px;width:40px;background:#cfcba3"></div>
<div class="sw" style="left:2530px;width:40px;background:#729844"></div>
<div class="sw" style="left:2570px;width:40px;background:#80ca51"></div>
<div class="sw" style="left:2610px;width:40px;background:#a4ca50"></div>
<div class="sw" style="left:2650px;width:40px;background:#a3ca75"></div>
<div class="sw" style="left:2690px;width:40px;background:#3f6636"></div>
<div class="sw" style="left:2730px;width:40px;background:#519740"></div>
<div class="sw" style="left:2770px;width:40px;background:#66c94e"></div>
<div class="sw" style="left:2810px;width:40px;background:#729a6c"></div>
<div class="sw" style="left:2850px;width:40px;background:#83cb77"></div>
<div class="sw" style="left:2890px;width:30px;background:#a5cca2"></div>
<svg class="abs" style="left:2px;top:2186px" width="88" height="40" viewBox="2 2186 88 40">
<g fill="#a8a8a8"><circle cx="23.5" cy="2194.5" r="2.6"/><circle cx="23.5" cy="2202" r="2.6"/><circle cx="23.5" cy="2210" r="2.6"/><circle cx="23.5" cy="2217.5" r="2.6"/><circle cx="32" cy="2194.5" r="2.6"/><circle cx="32" cy="2202" r="2.6"/><circle cx="32" cy="2210" r="2.6"/><circle cx="32" cy="2217.5" r="2.6"/></g>
<g stroke="#c9c9c9" stroke-width="3.6" fill="none"><circle cx="58" cy="2197" r="4.700"/><circle cx="58" cy="2215.500" r="4.700"/><path d="M67 2193h17M67 2200.500h17M67 2211.500h17M67 2219h17"/></g>
</svg>
<svg class="abs" style="left:2924px;top:2188px" width="36" height="36" viewBox="2924 2188 36 36"><path d="M2930 2190.5h24a4 4 0 0 1 4 4v14a4 4 0 0 1-4 4h-15l-8 8.5v-8.5h-1a4 4 0 0 1-4-4v-14a4 4 0 0 1 4-4z" fill="#b4b4b4"/><path d="M2933 2198.5h18M2933 2205h18" stroke="#2e2e2e" stroke-width="2.6"/></svg>
<div id="snap"><div class="abs" style="left:-1px;top:0;width:506px;height:1107px">
<div id="snaphead"></div><div id="snaptab"></div>
<div class="xb" style="left:19px;top:12px;width:28px;height:28px;background:#6e6e6e"><svg width="28" height="28" viewBox="-14 -14 28 28"><path d="M-6.04 -6.04L6.04 6.04M6.04 -6.04L-6.04 6.04" stroke="#1e1e1e" stroke-width="2.6" stroke-linecap="round" fill="none"/></svg></div>
<div class="abs" style="left:63px;top:12px;width:2px;height:28px;background:#5d5d5d"></div><div class="abs" style="left:72px;top:12px;width:2px;height:28px;background:#5d5d5d"></div>
<svg class="abs" style="left:96px;top:14px" width="18" height="26" viewBox="-9 -13 18 26"><path d="M-4.5 -2.5L0 -7.5L4.5 -2.5M-4.5 3L0 8L4.5 3" stroke="#e6e6e6" stroke-width="2" fill="none"/></svg>
<div class="abs" style="left:119px;top:10.5px;line-height:38px;font-size:23px">Snapping</div>
<div class="xb" style="left:231px;top:15.5px;width:24px;height:24px;background:#6e6e6e"><svg width="24" height="24" viewBox="-12 -12 24 24"><path d="M-5.32 -5.32L5.32 5.32M5.32 -5.32L-5.32 5.32" stroke="#1e1e1e" stroke-width="2.6" stroke-linecap="round" fill="none"/></svg></div>
<svg class="abs" style="left:456px;top:8px" width="34" height="36"><rect x="2" y="2" width="29" height="32" rx="5.5" fill="none" stroke="#d2d2d2" stroke-width="2.2"/><path d="M7.5 9.5h18M7.5 18h18M7.5 26.500h18" stroke="#d2d2d2" stroke-width="2.2"/></svg>
<div class="abs" style="left:58px;top:83px;line-height:38px;letter-spacing:-0.1px">Presets</div>
<div class="abs" style="left:145px;top:80px;width:338px;height:40px;border-radius:14px;background:#6d6d6d"></div>
<div class="abs" style="left:157px;top:82px;line-height:38px;font-size:23px">Custom</div>
<svg class="abs" style="left:440px;top:80px" width="40" height="40" viewBox="0 0 40 40"><path d="M9.5 14.5L21.5 27.5L33.5 14.5" fill="none" stroke="#e2e2e2" stroke-width="3.2" stroke-linecap="round" stroke-linejoin="round"/></svg>
<div class="abs" style="left:69px;top:184px;line-height:38px">Tolerance</div>
<div class="abs" style="left:183px;top:180px;width:160px;height:40px;background:#333"></div>
<div class="abs" style="left:191px;top:183px;line-height:38px;font-size:21.5px;letter-spacing:-0.8px">3,0</div>
<div class="abs" style="left:343px;top:180px;width:27px;height:39px;background:#6a6a6a;border-radius:7px"></div>
<svg class="abs" style="left:343px;top:180px" width="27" height="39"><path d="M6.5 16L13.5 9L20.5 16M6.5 23.5L13.5 30.500L20.5 23.5" stroke="#f0f0f0" stroke-width="2.4" fill="none"/></svg>
<div class="sep" style="top:231px"></div>
<div class="sep" style="top:445px"></div>
<div class="sep" style="top:809px"></div>
<div class="sep" style="top:1023px"></div>
<div class="row" style="top:135px"><div class="cb on"><svg width="30" height="30"><path d="M7.5 15.5L12.800 21.500L22.500 8.500" stroke="#fff" stroke-width="3.1" fill="none" stroke-linecap="round" stroke-linejoin="round"/></svg></div><div class="lb">Allow Snapping</div></div>
<div class="row" style="top:249px"><div class="cb"></div><div class="lb">Snap to Grid</div></div>
<div class="row" style="top:299px"><div class="cb on"><svg width="30" height="30"><path d="M7.5 15.5L12.800 21.500L22.500 8.500" stroke="#fff" stroke-width="3.1" fill="none" stroke-linecap="round" stroke-linejoin="round"/></svg></div><div class="lb">Snap to Guidelines</div></div>
<div class="row" style="top:349px"><div class="cb"></div><div class="lb">Snap to Artboards</div></div>
<div class="row" style="top:399px"><div class="cb"></div><div class="lb">Snap to Slices</div></div>
<div class="row" style="top:463px"><div class="cb"></div><div class="lb">Snap to Objects</div></div>
<div class="row" style="top:513px"><div class="cb"></div><div class="lb">Snap to Distances</div></div>
<div class="row" style="top:563px"><div class="cb"></div><div class="lb">Snap to Size References</div></div>
<div class="row" style="top:613px"><div class="cb"></div><div class="lb">Snap to Shape</div></div>
<div class="row" style="top:663px"><div class="cb"></div><div class="lb">Snap to Points</div></div>
<div class="row" style="top:713px"><div class="cb on"><svg width="30" height="30"><path d="M7.5 15.5L12.800 21.500L22.500 8.500" stroke="#fff" stroke-width="3.1" fill="none" stroke-linecap="round" stroke-linejoin="round"/></svg></div><div class="lb">Collision Snapping</div></div>
<div class="row" style="top:763px"><div class="cb"></div><div class="lb">Formation Snapping</div></div>
<div class="row" style="top:827px"><div class="cb on"><svg width="30" height="30"><path d="M7.5 15.5L12.800 21.500L22.500 8.500" stroke="#fff" stroke-width="3.1" fill="none" stroke-linecap="round" stroke-linejoin="round"/></svg></div><div class="lb">Show Indicators</div></div>
<div class="row" style="top:877px"><div class="cb on"><svg width="30" height="30"><path d="M7.5 15.5L12.800 21.500L22.500 8.500" stroke="#fff" stroke-width="3.1" fill="none" stroke-linecap="round" stroke-linejoin="round"/></svg></div><div class="lb">Use Viewing Angle</div></div>
<div class="row" style="top:927px"><div class="cb on"><svg width="30" height="30"><path d="M7.5 15.5L12.800 21.500L22.500 8.500" stroke="#fff" stroke-width="3.1" fill="none" stroke-linecap="round" stroke-linejoin="round"/></svg></div><div class="lb">All Layers</div></div>
<div class="row" style="top:977px"><div class="cb"></div><div class="lb">Limit to Context</div></div>
<svg class="abs" style="left:150px;top:1040px" width="340" height="52" viewBox="2487 1680 340 52">
<rect x="2505" y="1691" width="30" height="30" rx="4" fill="none" stroke="#868686" stroke-width="2.200"/><path d="M2520 1696.500V1715.500M2510.500 1706H2529.500" stroke="#868686" stroke-width="2.200"/>
<rect x="2561.500" y="1692" width="29" height="28.500" fill="none" stroke="#868686" stroke-width="3.400"/><path d="M2568 1706H2584" stroke="#868686" stroke-width="2.600"/>
<rect x="2617.800" y="1692" width="28.500" height="28" fill="none" stroke="#fff" stroke-width="4"/><path d="M2626 1699.500L2638 1712.500M2638 1699.500L2626 1712.500" stroke="#fff" stroke-width="3"/>
<path d="M2676.500 1693.500V1689.800H2705V1718H2701" fill="none" stroke="#868686" stroke-width="2"/><rect x="2671.500" y="1694" width="29" height="28.500" rx="1" fill="none" stroke="#868686" stroke-width="2.200"/><path d="M2677 1709.500L2683.500 1716L2695.500 1700.500" fill="none" stroke="#868686" stroke-width="3.400"/>
<path d="M2730.500 1696H2757.500" stroke="#868686" stroke-width="2.600" stroke-linecap="round"/><path d="M2739 1694.500C2739 1690 2749 1690 2749 1694.500" fill="none" stroke="#868686" stroke-width="2.200"/><path d="M2732.500 1699.500H2755.500L2754.200 1718.500C2754 1721 2752.500 1722.500 2750 1722.500H2738C2735.500 1722.500 2734 1721 2733.800 1718.500Z" fill="#868686"/><path d="M2738.800 1702.500V1719M2744 1702.500V1719M2749.200 1702.500V1719" stroke="#424242" stroke-width="1.800"/>
<g stroke="#868686" stroke-width="1.700" fill="#424242"><path d="M2785 1695.500H2815M2785 1706H2815M2785 1716.500H2815"/><circle cx="2793.500" cy="1695.500" r="2.900"/><circle cx="2808" cy="1706" r="2.900"/><circle cx="2797.500" cy="1716.500" r="2.900"/></g>
</svg>
</div></div>
</div></body></html>
